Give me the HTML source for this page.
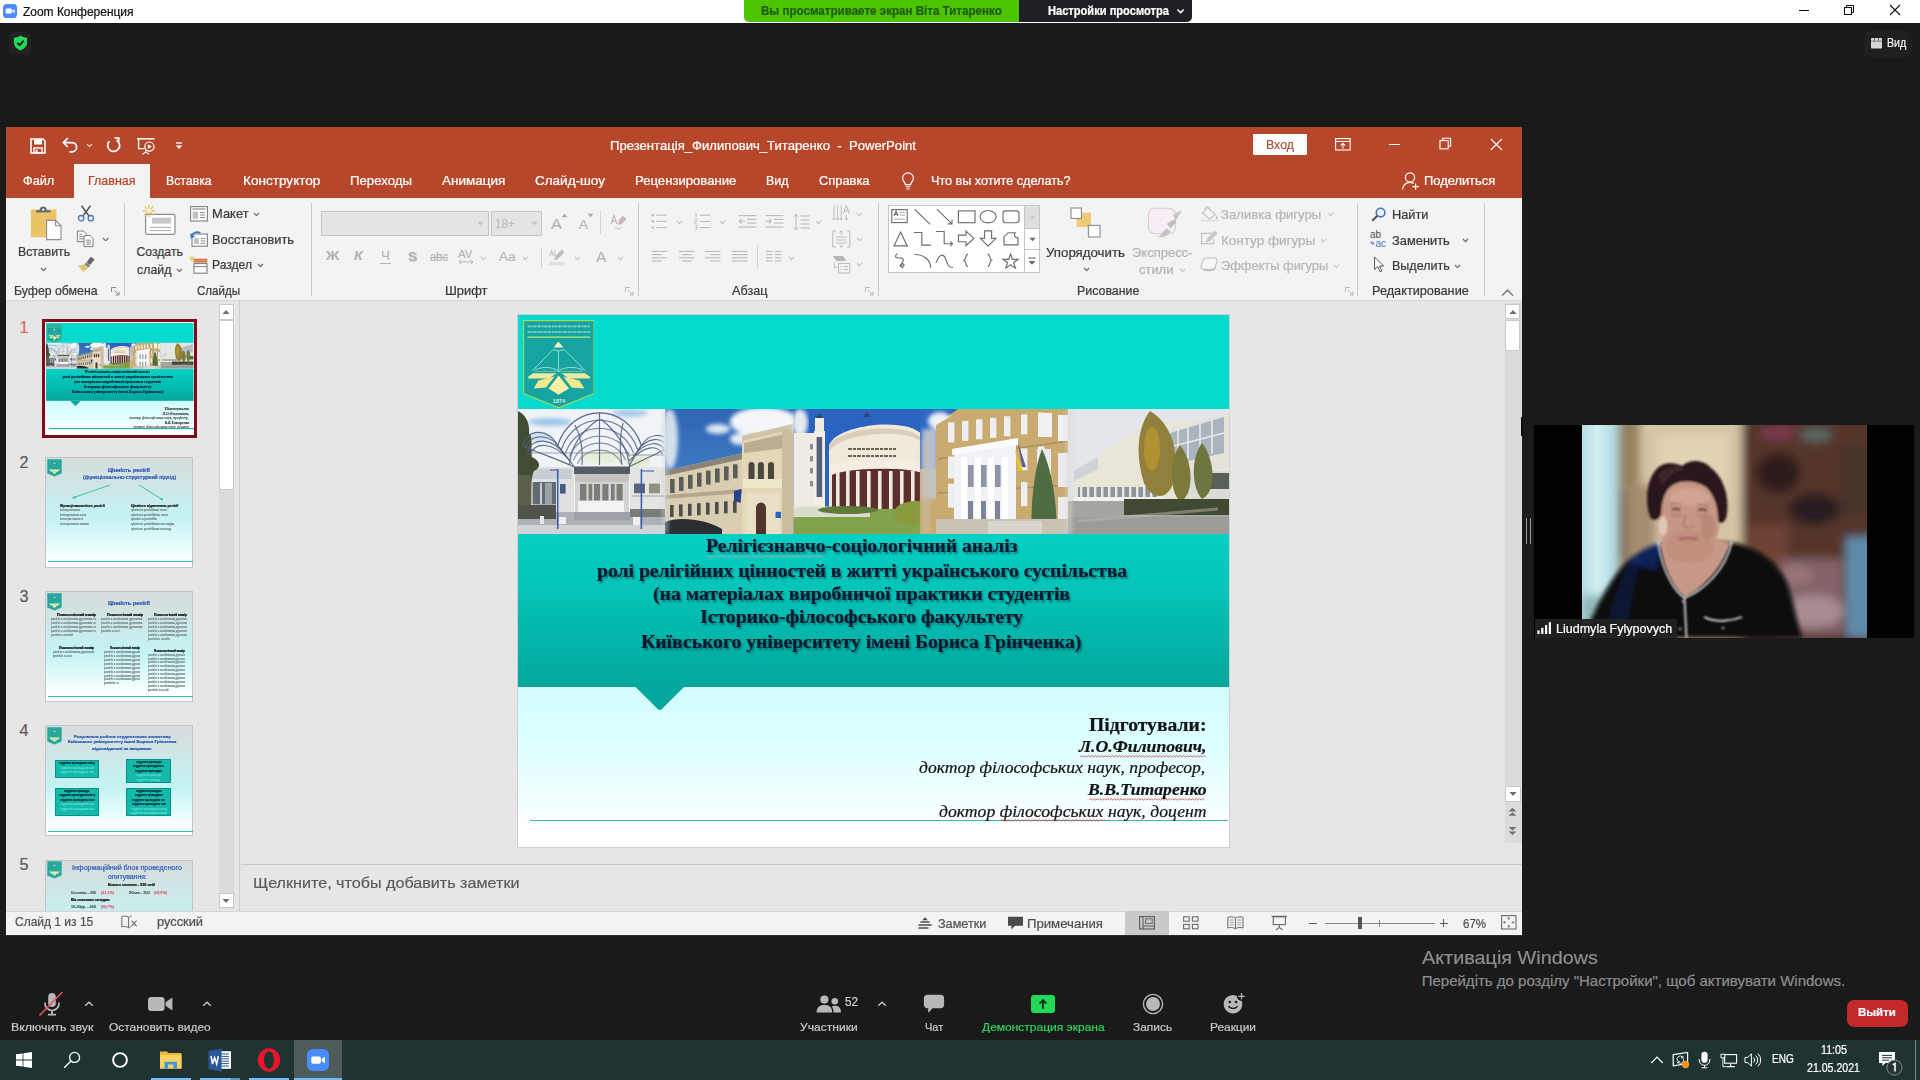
<!DOCTYPE html>
<html><head><meta charset="utf-8"><title>Zoom</title>
<style>
html,body{margin:0;padding:0;}
body{width:1920px;height:1080px;overflow:hidden;background:#1a1a1a;font-family:"Liberation Sans",sans-serif;position:relative;}
.t{position:absolute;white-space:pre;transform-origin:0 0;line-height:1;-webkit-text-stroke:0.22px currentColor;}
.r{position:absolute;display:block;}
</style></head><body>
<div class="r" style="left:0px;top:0px;width:1920px;height:23px;background:#fff;"></div>
<svg class="r" style="left:3px;top:4px;" width="14" height="14" viewBox="0 0 14 14"><rect x="0" y="0" width="14" height="14" rx="3.6" fill="#4a8cff"/><rect x="2.6" y="4.6" width="6.2" height="4.9" rx="1.2" fill="#fff"/><path d="M9.3 6.4 L11.6 4.9 V9.2 L9.3 7.7 Z" fill="#fff"/></svg>
<div class="t" style="left:23.20px;top:5.57px;font-size:12.20px;color:#111;transform:scaleX(0.9810);">Zoom Конференция</div>
<div class="r" style="left:744px;top:0px;width:275px;height:22px;background:#4cc400;border-radius:0 0 0 5px;"></div>
<div class="t" style="left:761.00px;top:4.87px;font-size:12.20px;color:#1f5c12;transform:scaleX(0.9509);font-weight:bold;">Вы просматриваете экран Віта Титаренко</div>
<div class="r" style="left:1019px;top:0px;width:173px;height:22px;background:#1f2024;border-radius:0 0 5px 0;"></div>
<div class="t" style="left:1048.00px;top:4.87px;font-size:12.20px;color:#fff;transform:scaleX(0.9106);font-weight:bold;">Настройки просмотра</div>
<svg class="r" style="left:1176px;top:7px;" width="10" height="8" viewBox="0 0 10 8"><path d="M1.5 2.5 L4.6 5.6 L7.7 2.5" fill="none" stroke="#fff" stroke-width="1.5"/></svg>
<div class="r" style="left:1799px;top:10px;width:10px;height:1px;background:#111;"></div>
<svg class="r" style="left:1843px;top:4px;" width="12" height="12" viewBox="0 0 12 12"><path d="M3.5 3.5 V1.5 H10.5 V8.5 H8.5" fill="none" stroke="#111" stroke-width="1"/><rect x="1.5" y="3.5" width="7" height="7" fill="none" stroke="#111" stroke-width="1"/></svg>
<svg class="r" style="left:1889px;top:4px;" width="12" height="12" viewBox="0 0 12 12"><path d="M1 1 L11 11 M11 1 L1 11" stroke="#111" stroke-width="1.1"/></svg>
<div class="r" style="left:8.5px;top:32px;width:22.5px;height:22.5px;background:#222;border-radius:5px;"></div>
<svg class="r" style="left:13px;top:35px;" width="15" height="16" viewBox="0 0 15 16"><path d="M7.5 0.6 C5.6 2 3.4 2.6 0.9 2.7 V7.6 C0.9 11.3 3.6 13.9 7.5 15.4 C11.4 13.9 14.1 11.3 14.1 7.6 V2.7 C11.6 2.6 9.4 2 7.5 0.6 Z" fill="#23d959"/><path d="M4.3 7.8 L6.6 10 L10.8 5.6" fill="none" stroke="#1a1a1a" stroke-width="1.7"/></svg>
<div class="r" style="left:1864px;top:31px;width:48px;height:26px;background:#202020;border-radius:7px;"></div>
<svg class="r" style="left:1870.5px;top:38px;" width="11" height="10.5" viewBox="0 0 11 10.5"><rect x="0" y="0" width="11" height="10.5" rx="0.8" fill="#d6d6d6"/><rect x="0" y="2.7" width="11" height="0.9" fill="#232323" opacity="0.55"/><rect x="3.1" y="0" width="0.9" height="2.7" fill="#232323" opacity="0.7"/><rect x="7" y="0" width="0.9" height="2.7" fill="#232323" opacity="0.7"/></svg>
<div class="t" style="left:1886.70px;top:36.77px;font-size:12.20px;color:#f2f2f2;transform:scaleX(0.8744);">Вид</div>
<div class="r" style="left:6px;top:127px;width:1516px;height:71px;background:#b7472a;"></div>
<svg class="r" style="left:30px;top:138px;" width="16" height="16" viewBox="0 0 16 16"><path d="M1 1 H13 L15 3 V15 H1 Z" fill="none" stroke="#fff" stroke-width="1.6"/><rect x="4" y="1.5" width="8" height="5" fill="#fff"/><rect x="4" y="10" width="8" height="5" fill="none" stroke="#fff" stroke-width="1.4"/><rect x="5.6" y="11.6" width="2" height="3.4" fill="#fff"/></svg>
<svg class="r" style="left:62px;top:137px;" width="17" height="17" viewBox="0 0 17 17"><path d="M1.5 5.6 H10 A4.6 4.6 0 0 1 10 14.8 H7.5" fill="none" stroke="#fff" stroke-width="1.7"/><path d="M5.8 1.2 L1.4 5.6 L5.8 10" fill="none" stroke="#fff" stroke-width="1.7"/></svg>
<svg class="r" style="left:85.5px;top:143px;" width="7" height="4.6" viewBox="0 0 7 4.6"><path d="M1 1 L3.5 3.6 L6 1" fill="none" stroke="#f0d0c6" stroke-width="1.1"/></svg>
<svg class="r" style="left:105px;top:137px;" width="17" height="17" viewBox="0 0 17 17"><path d="M11.6 3.2 A6 6 0 1 1 4.4 4.2" fill="none" stroke="#fff" stroke-width="1.7"/><path d="M9.2 1 H13.6 V5.4" fill="none" stroke="#fff" stroke-width="1.7" transform="rotate(8 11.6 3.2)"/></svg>
<svg class="r" style="left:136px;top:137px;" width="20" height="19" viewBox="0 0 20 19"><path d="M1 1.8 H18.6" stroke="#fff" stroke-width="1.5"/><path d="M2.6 2 V11.6 H8.4" fill="none" stroke="#fff" stroke-width="1.3"/><circle cx="13.4" cy="9.6" r="4.6" fill="none" stroke="#fff" stroke-width="1.2"/><path d="M11.9 7.2 L15.8 9.6 L11.9 12 Z" fill="#fff"/><path d="M9.8 12.6 V15 M6.4 17.4 L9.8 15 L13.2 17.4" fill="none" stroke="#fff" stroke-width="1.1"/></svg>
<svg class="r" style="left:175px;top:141px;" width="8" height="10" viewBox="0 0 8 10"><path d="M1 2 H7" stroke="#fff" stroke-width="1.3"/><path d="M0.8 4.6 H7.2 L4 8 Z" fill="#fff"/></svg>
<div class="t" style="left:610.00px;top:139.67px;font-size:12.20px;color:#fff;transform:scaleX(1.0756);">Презентація_Филипович_Титаренко  -  PowerPoint</div>
<div class="r" style="left:1253px;top:134px;width:54px;height:21px;background:#fff;border-radius:1px;"></div>
<div class="t" style="left:1266.00px;top:139.27px;font-size:12.20px;color:#b0503a;transform:scaleX(1.0145);">Вход</div>
<svg class="r" style="left:1334.5px;top:137.5px;" width="16" height="13" viewBox="0 0 16 13"><rect x="0.6" y="0.6" width="14.6" height="11.4" fill="none" stroke="#fff" stroke-width="1.1"/><path d="M0.6 3.4 H15.2" stroke="#fff" stroke-width="1"/><path d="M7.9 10.4 V5.4 M5.6 7.6 L7.9 5.2 L10.2 7.6" fill="none" stroke="#fff" stroke-width="1.1"/></svg>
<div class="r" style="left:1388.5px;top:143.5px;width:11.5px;height:1.2px;background:#fff;"></div>
<svg class="r" style="left:1439px;top:137px;" width="13" height="13" viewBox="0 0 13 13"><path d="M3.6 3.4 V1.2 H11.6 V9.2 H9.4" fill="none" stroke="#fff" stroke-width="1.1"/><rect x="1" y="3.6" width="8.2" height="8.2" fill="none" stroke="#fff" stroke-width="1.1"/></svg>
<svg class="r" style="left:1490px;top:137.5px;" width="13" height="13" viewBox="0 0 13 13"><path d="M0.8 0.8 L12 12 M12 0.8 L0.8 12" stroke="#fff" stroke-width="1.2"/></svg>
<div class="r" style="left:74px;top:164px;width:76px;height:34px;background:#f3f3f3;"></div>
<div class="t" style="left:23.00px;top:175.27px;font-size:12.20px;color:#fff;transform:scaleX(1.0435);">Файл</div>
<div class="t" style="left:87.50px;top:175.27px;font-size:12.20px;color:#b7472a;transform:scaleX(1.0229);">Главная</div>
<div class="t" style="left:166.30px;top:175.27px;font-size:12.20px;color:#fff;transform:scaleX(1.0078);">Вставка</div>
<div class="t" style="left:242.50px;top:175.27px;font-size:12.20px;color:#fff;transform:scaleX(1.1141);">Конструктор</div>
<div class="t" style="left:350.00px;top:175.27px;font-size:12.20px;color:#fff;transform:scaleX(1.0834);">Переходы</div>
<div class="t" style="left:441.50px;top:175.27px;font-size:12.20px;color:#fff;transform:scaleX(1.1088);">Анимация</div>
<div class="t" style="left:535.00px;top:175.27px;font-size:12.20px;color:#fff;transform:scaleX(1.1068);">Слайд-шоу</div>
<div class="t" style="left:635.00px;top:175.27px;font-size:12.20px;color:#fff;transform:scaleX(1.0774);">Рецензирование</div>
<div class="t" style="left:766.00px;top:175.27px;font-size:12.20px;color:#fff;transform:scaleX(1.0194);">Вид</div>
<div class="t" style="left:818.50px;top:175.27px;font-size:12.20px;color:#fff;transform:scaleX(1.0552);">Справка</div>
<div class="t" style="left:931.30px;top:175.27px;font-size:12.20px;color:#fff;transform:scaleX(1.0358);">Что вы хотите сделать?</div>
<svg class="r" style="left:900px;top:172px;" width="16" height="19" viewBox="0 0 16 19"><path d="M5.4 12.6 C5.4 10.6 2.6 9.4 2.6 6.2 A5.4 5.4 0 0 1 13.4 6.2 C13.4 9.4 10.6 10.6 10.6 12.6 Z" fill="none" stroke="#fff" stroke-width="1.2"/><path d="M5.6 14.8 H10.4 M6.4 17 H9.6" stroke="#fff" stroke-width="1.1"/></svg>
<svg class="r" style="left:1401px;top:171px;" width="20" height="20" viewBox="0 0 20 20"><circle cx="9" cy="6.4" r="4.6" fill="none" stroke="#fff" stroke-width="1.2"/><path d="M1.4 18.4 C2.2 13.8 5 11.4 9 11.4 C10.6 11.4 11.8 11.8 12.8 12.4" fill="none" stroke="#fff" stroke-width="1.2"/><path d="M14.6 12.4 V18.8 M11.4 15.6 H17.8" stroke="#fff" stroke-width="1.2"/></svg>
<div class="t" style="left:1423.80px;top:175.27px;font-size:12.20px;color:#fff;transform:scaleX(1.0569);">Поделиться</div>
<div class="r" style="left:6px;top:198px;width:1516px;height:101.5px;background:#f3f3f3;"></div>
<div class="r" style="left:6px;top:299.5px;width:1516px;height:1px;background:#d6d6d6;"></div>
<svg class="r" style="left:30px;top:206px;" width="33" height="35" viewBox="0 0 33 35"><rect x="0.8" y="3.6" width="25.6" height="27.6" rx="1" fill="#ecc467"/><path d="M6 6.4 V4.2 H9.6 A3.6 3.6 0 0 1 16.8 4.2 H20.6 V6.4 Z" fill="#6a6a72"/><circle cx="13.2" cy="3.6" r="1.2" fill="#f3f3f3"/><path d="M16.6 14.4 H25.6 L31 19.8 V33.6 H16.6 Z" fill="#fff" stroke="#8c8c92" stroke-width="1.1"/><path d="M25.6 14.4 V19.8 H31" fill="none" stroke="#8c8c92" stroke-width="1.1"/></svg>
<div class="t" style="left:17.80px;top:246.17px;font-size:12.20px;color:#3a3a3a;transform:scaleX(1.0094);">Вставить</div>
<svg class="r" style="left:40px;top:267px;" width="7" height="4.6" viewBox="0 0 7 4.6"><path d="M1 1 L3.5 3.6 L6 1" fill="none" stroke="#666" stroke-width="1.1"/></svg>
<svg class="r" style="left:77px;top:205px;" width="18" height="17" viewBox="0 0 18 17"><path d="M4.6 0.8 L12.4 11.6 M13.4 0.8 L5.6 11.6" stroke="#50505a" stroke-width="1.5"/><circle cx="4.2" cy="13.2" r="2.7" fill="none" stroke="#4a7ab5" stroke-width="1.3"/><circle cx="13.8" cy="13.2" r="2.7" fill="none" stroke="#4a7ab5" stroke-width="1.3"/></svg>
<svg class="r" style="left:76px;top:230px;" width="19" height="18" viewBox="0 0 19 18"><path d="M1.4 1 H7.6 L10.4 3.8 V11.6 H1.4 Z" fill="#fff" stroke="#7a7a82" stroke-width="1"/><path d="M3.2 4.4 H6.4 M3.2 6.6 H8.4 M3.2 8.8 H8.4" stroke="#7a7a82" stroke-width="0.9"/><path d="M8 5.6 H14.2 L17 8.4 V16.6 H8 Z" fill="#fff" stroke="#7a7a82" stroke-width="1"/><path d="M10 10.2 H15 M10 12.2 H15 M10 14.2 H15" stroke="#7a7a82" stroke-width="0.9"/></svg>
<svg class="r" style="left:102px;top:236.5px;" width="7.4" height="4.8" viewBox="0 0 7.4 4.8"><path d="M1 1 L3.7 3.8 L6.4 1" fill="none" stroke="#666" stroke-width="1.1"/></svg>
<svg class="r" style="left:77px;top:256px;" width="19" height="17" viewBox="0 0 19 17"><path d="M13.6 0.8 L17.6 3.4 L13 9 L9.6 6.6 Z" fill="#6a6068"/><path d="M9 6.4 L13.2 9.4 L11.6 11.4 L7.4 8.4 Z" fill="#8a8088"/><path d="M7 8.6 L11.4 11.8 L6.4 15.8 L0.8 9.8 Z" fill="#dcc66a"/></svg>
<div class="t" style="left:14.40px;top:284.67px;font-size:12.20px;color:#3a3a3a;transform:scaleX(1.0085);">Буфер обмена</div>
<svg class="r" style="left:111px;top:287px;" width="9" height="9" viewBox="0 0 9 9"><path d="M0.5 5 V0.5 H5 M3.4 3.4 L8 8 M8 4.6 V8 H4.6" fill="none" stroke="#8a8a8a" stroke-width="1"/></svg>
<div class="r" style="left:124px;top:202.5px;width:1px;height:93px;background:#c9c9c9;"></div>
<svg class="r" style="left:142px;top:204px;" width="35" height="32" viewBox="0 0 35 32"><rect x="3.6" y="10.4" width="29.4" height="20" rx="1.6" fill="#fff" stroke="#8c8c92" stroke-width="1.2"/><rect x="10" y="13.6" width="19" height="6" fill="#c8c8cc"/><path d="M7.6 23.4 H29 M7.6 26.6 H29" stroke="#a8a8ae" stroke-width="1"/><path d="M7 0.6 V13 M0.8 6.8 H13.2 M2.6 2.4 L11.4 11.2 M11.4 2.4 L2.6 11.2" stroke="#e2c45a" stroke-width="1.3"/><circle cx="7" cy="6.8" r="2.2" fill="#f3f3f3"/></svg>
<div class="t" style="left:136.50px;top:246.17px;font-size:12.20px;color:#3a3a3a;">Создать</div>
<div class="t" style="left:136.90px;top:264.07px;font-size:12.20px;color:#3a3a3a;transform:scaleX(1.0136);">слайд</div>
<svg class="r" style="left:176px;top:267.6px;" width="7" height="4.6" viewBox="0 0 7 4.6"><path d="M1 1 L3.5 3.6 L6 1" fill="none" stroke="#666" stroke-width="1.1"/></svg>
<svg class="r" style="left:190px;top:205.5px;" width="18" height="16" viewBox="0 0 18 16"><rect x="0.6" y="0.6" width="16.8" height="14.4" fill="#fff" stroke="#7e7e86" stroke-width="1.1"/><path d="M2.4 3 H15.6" stroke="#9a9aa0" stroke-width="1.3"/><rect x="2.6" y="5.4" width="5.4" height="7.4" fill="#c2c2c6"/><path d="M10 6.4 H15 M10 9 H15 M10 11.6 H15" stroke="#8a8a90" stroke-width="1"/></svg>
<div class="t" style="left:211.90px;top:208.27px;font-size:12.20px;color:#3a3a3a;transform:scaleX(1.0600);">Макет</div>
<svg class="r" style="left:253.4px;top:211.6px;" width="7" height="4.6" viewBox="0 0 7 4.6"><path d="M1 1 L3.5 3.6 L6 1" fill="none" stroke="#666" stroke-width="1.1"/></svg>
<svg class="r" style="left:190px;top:230px;" width="18" height="17" viewBox="0 0 18 17"><rect x="2" y="4" width="15.4" height="12.2" fill="#fff" stroke="#7e7e86" stroke-width="1.1"/><rect x="4" y="8" width="5" height="6" fill="#c2c2c6"/><path d="M10.6 8.6 H15.4 M10.6 11 H15.4 M10.6 13.4 H15.4" stroke="#8a8a90" stroke-width="1"/><path d="M1.2 7.6 C1.8 3.2 6 0.8 10.4 2.8" fill="none" stroke="#3f78c0" stroke-width="1.7"/><path d="M0 3.4 L1 8.4 L5.4 6.4 Z" fill="#3f78c0"/></svg>
<div class="t" style="left:211.90px;top:234.07px;font-size:12.20px;color:#3a3a3a;transform:scaleX(1.0509);">Восстановить</div>
<svg class="r" style="left:189px;top:255px;" width="19" height="19" viewBox="0 0 19 19"><rect x="5" y="8.6" width="13" height="9.6" fill="#fff" stroke="#7e7e86" stroke-width="1.1"/><rect x="5" y="4" width="13" height="3.2" fill="#e0855a" stroke="#c96a40" stroke-width="0.6"/><path d="M5 11.6 H18" stroke="#7e7e86" stroke-width="1"/><path d="M3 0.4 V6.6 M0 3.5 H6 M0.9 1.4 L5.1 5.6 M5.1 1.4 L0.9 5.6" stroke="#e8c75a" stroke-width="0.9"/></svg>
<div class="t" style="left:211.90px;top:259.47px;font-size:12.20px;color:#3a3a3a;transform:scaleX(0.9919);">Раздел</div>
<svg class="r" style="left:256.5px;top:263px;" width="7" height="4.6" viewBox="0 0 7 4.6"><path d="M1 1 L3.5 3.6 L6 1" fill="none" stroke="#666" stroke-width="1.1"/></svg>
<div class="t" style="left:196.90px;top:284.67px;font-size:12.20px;color:#3a3a3a;transform:scaleX(0.9490);">Слайды</div>
<div class="r" style="left:310.5px;top:202.5px;width:1px;height:93px;background:#c9c9c9;"></div>
<div class="r" style="left:320.5px;top:210.5px;width:168.5px;height:25px;background:#e4e4e4;box-sizing:border-box;border:1px solid #c6c6c6;"></div>
<div class="r" style="left:491px;top:210.5px;width:51px;height:25px;background:#e4e4e4;box-sizing:border-box;border:1px solid #c6c6c6;"></div>
<svg class="r" style="left:477px;top:221px;" width="7" height="5" viewBox="0 0 7 5"><path d="M0.5 0.8 H6.5 L3.5 4.2 Z" fill="#c0c0c0"/></svg>
<svg class="r" style="left:530.5px;top:221px;" width="7" height="5" viewBox="0 0 7 5"><path d="M0.5 0.8 H6.5 L3.5 4.2 Z" fill="#c0c0c0"/></svg>
<div class="t" style="left:495.00px;top:216.60px;font-size:13.00px;color:#bdbdbd;transform:scaleX(0.9069);">18+</div>
<div class="t" style="left:551.00px;top:216.28px;font-size:15.50px;color:#b4b4b4;transform:scaleX(1.0639);">A</div>
<svg class="r" style="left:561px;top:213px;" width="7" height="5" viewBox="0 0 7 5"><path d="M0.5 4.2 L3.5 0.8 L6.5 4.2 Z" fill="#a8a8a8"/></svg>
<div class="t" style="left:579.00px;top:218.82px;font-size:12.50px;color:#b4b4b4;transform:scaleX(1.0794);">A</div>
<svg class="r" style="left:587px;top:213px;" width="7" height="5" viewBox="0 0 7 5"><path d="M0.5 0.8 H6.5 L3.5 4.2 Z" fill="#a8a8a8"/></svg>
<div class="r" style="left:600px;top:211px;width:1px;height:23px;background:#d4d4d4;"></div>
<svg class="r" style="left:610px;top:214px;" width="17" height="17" viewBox="0 0 17 17"><path d="M1 10 L4 1.6 L7 10 M2 7.2 H6" fill="none" stroke="#b8b8b8" stroke-width="1.2"/><path d="M9.4 5.6 L13 1.6 L16.4 5 L11.4 10.6 L7.8 10.6 Z" fill="#c9b6bf"/><path d="M5 13.4 C8 15.6 10 15.2 12 13" fill="none" stroke="#c0c0c0" stroke-width="1"/></svg>
<div class="t" style="left:325.50px;top:250.33px;font-size:12.60px;color:#b4b4b4;transform:scaleX(1.1679);font-weight:bold;">Ж</div>
<div class="t" style="left:353.80px;top:250.33px;font-size:12.60px;color:#b4b4b4;transform:scaleX(1.1232);font-weight:bold;font-style:italic;">К</div>
<div class="t" style="left:380.50px;top:250.33px;font-size:12.60px;color:#b4b4b4;transform:scaleX(1.0717);">Ч</div>
<div class="r" style="left:380px;top:263px;width:10.5px;height:1.1px;background:#b4b4b4;"></div>
<div class="t" style="left:408.00px;top:249.66px;font-size:13.40px;color:#b4b4b4;transform:scaleX(1.0069);font-weight:bold;text-shadow:1px 1px 1px #ccc;">S</div>
<div class="t" style="left:430.00px;top:250.84px;font-size:12.00px;color:#b4b4b4;transform:scaleX(0.9303);text-decoration:line-through;">abc</div>
<div class="t" style="left:458.00px;top:248.63px;font-size:10.60px;color:#b4b4b4;transform:scaleX(1.0858);">AV</div>
<svg class="r" style="left:457.5px;top:259px;" width="16" height="6" viewBox="0 0 16 6"><path d="M1 3 H15 M3.4 0.8 L1 3 L3.4 5.2 M12.6 0.8 L15 3 L12.6 5.2" fill="none" stroke="#b4b4b4" stroke-width="1"/></svg>
<svg class="r" style="left:480px;top:255.6px;" width="7" height="4.6" viewBox="0 0 7 4.6"><path d="M1 1 L3.5 3.6 L6 1" fill="none" stroke="#c4c4c4" stroke-width="1.1"/></svg>
<div class="t" style="left:499.00px;top:250.00px;font-size:13.00px;color:#b4b4b4;transform:scaleX(1.0376);">Aa</div>
<svg class="r" style="left:521.6px;top:255.6px;" width="7" height="4.6" viewBox="0 0 7 4.6"><path d="M1 1 L3.5 3.6 L6 1" fill="none" stroke="#c4c4c4" stroke-width="1.1"/></svg>
<div class="r" style="left:540.5px;top:247px;width:1px;height:21px;background:#d4d4d4;"></div>
<svg class="r" style="left:548px;top:248px;" width="18" height="18" viewBox="0 0 18 18"><path d="M1.6 8 L3.6 2.6 L5.6 8 M2.4 6.2 H4.8" fill="none" stroke="#b8b8b8" stroke-width="0.9"/><path d="M7 2 V8" stroke="#b8b8b8" stroke-width="0.9"/><path d="M13.6 1.6 L16.4 4.2 L9.4 11.4 L6.2 12 L7 8.8 Z" fill="#bdbdbd"/><rect x="1" y="14" width="16" height="3.4" fill="#e4dede"/></svg>
<svg class="r" style="left:573.6px;top:255.6px;" width="7" height="4.6" viewBox="0 0 7 4.6"><path d="M1 1 L3.5 3.6 L6 1" fill="none" stroke="#c4c4c4" stroke-width="1.1"/></svg>
<div class="t" style="left:595.50px;top:248.90px;font-size:15.00px;color:#b4b4b4;transform:scaleX(1.0494);">A</div>
<svg class="r" style="left:617px;top:255.6px;" width="7" height="4.6" viewBox="0 0 7 4.6"><path d="M1 1 L3.5 3.6 L6 1" fill="none" stroke="#c4c4c4" stroke-width="1.1"/></svg>
<div class="t" style="left:445.00px;top:284.67px;font-size:12.20px;color:#3a3a3a;transform:scaleX(1.0588);">Шрифт</div>
<svg class="r" style="left:625px;top:287px;" width="9" height="9" viewBox="0 0 9 9"><path d="M0.5 5 V0.5 H5 M3.4 3.4 L8 8 M8 4.6 V8 H4.6" fill="none" stroke="#b8b8b8" stroke-width="1"/></svg>
<div class="r" style="left:638px;top:202.5px;width:1px;height:93px;background:#c9c9c9;"></div>
<svg class="r" style="left:651px;top:213px;" width="17" height="17" viewBox="0 0 17 17"><path d="M5.4 2.2 H16" stroke="#b9b9b9" stroke-width="1.1"/><path d="M5.4 8.4 H16" stroke="#b9b9b9" stroke-width="1.1"/><path d="M5.4 14.6 H16" stroke="#b9b9b9" stroke-width="1.1"/><circle cx="1.8" cy="2.2" r="1.2" fill="#b9b9b9"/><circle cx="1.8" cy="8.4" r="1.2" fill="#b9b9b9"/><circle cx="1.8" cy="14.6" r="1.2" fill="#b9b9b9"/></svg>
<svg class="r" style="left:676px;top:219.6px;" width="7" height="4.6" viewBox="0 0 7 4.6"><path d="M1 1 L3.5 3.6 L6 1" fill="none" stroke="#c4c4c4" stroke-width="1.1"/></svg>
<svg class="r" style="left:694px;top:213px;" width="17" height="17" viewBox="0 0 17 17"><path d="M5.8 2.2 H16.4" stroke="#b9b9b9" stroke-width="1.1"/><path d="M5.8 8.4 H16.4" stroke="#b9b9b9" stroke-width="1.1"/><path d="M5.8 14.6 H16.4" stroke="#b9b9b9" stroke-width="1.1"/><path d="M1 0.6 H2.2 V4 M0.8 6.4 H2.8 V8.2 H0.8 V10.2 H2.8 M0.8 12.4 H2.8 V16.4 H0.8 M1.4 14.4 H2.8" fill="none" stroke="#b9b9b9" stroke-width="0.8"/></svg>
<svg class="r" style="left:719px;top:219.6px;" width="7" height="4.6" viewBox="0 0 7 4.6"><path d="M1 1 L3.5 3.6 L6 1" fill="none" stroke="#c4c4c4" stroke-width="1.1"/></svg>
<svg class="r" style="left:738px;top:214px;" width="19" height="16" viewBox="0 0 19 16"><path d="M0.4 1.6 H18.4" stroke="#b9b9b9" stroke-width="1.1"/><path d="M9 5.4 H18.4" stroke="#b9b9b9" stroke-width="1.1"/><path d="M9 9 H18.4" stroke="#b9b9b9" stroke-width="1.1"/><path d="M0.4 13 H18.4" stroke="#b9b9b9" stroke-width="1.1"/><path d="M7 7.2 H1.2 M3.6 4.8 L1.2 7.2 L3.6 9.6" fill="none" stroke="#b9b9b9" stroke-width="1.1"/></svg>
<svg class="r" style="left:765px;top:214px;" width="19" height="16" viewBox="0 0 19 16"><path d="M0.4 1.6 H18.4" stroke="#b9b9b9" stroke-width="1.1"/><path d="M9 5.4 H18.4" stroke="#b9b9b9" stroke-width="1.1"/><path d="M9 9 H18.4" stroke="#b9b9b9" stroke-width="1.1"/><path d="M0.4 13 H18.4" stroke="#b9b9b9" stroke-width="1.1"/><path d="M0.6 7.2 H6.4 M4 4.8 L6.4 7.2 L4 9.6" fill="none" stroke="#b9b9b9" stroke-width="1.1"/></svg>
<svg class="r" style="left:793px;top:213px;" width="18" height="18" viewBox="0 0 18 18"><path d="M7.4 3 H16.6" stroke="#b9b9b9" stroke-width="1.1"/><path d="M7.4 7 H16.6" stroke="#b9b9b9" stroke-width="1.1"/><path d="M7.4 11 H16.6" stroke="#b9b9b9" stroke-width="1.1"/><path d="M7.4 15 H16.6" stroke="#b9b9b9" stroke-width="1.1"/><path d="M3 1.4 V16.6 M0.8 3.8 L3 1.4 L5.2 3.8 M0.8 14.2 L3 16.6 L5.2 14.2" fill="none" stroke="#b9b9b9" stroke-width="1"/></svg>
<svg class="r" style="left:815.4px;top:219.6px;" width="7" height="4.6" viewBox="0 0 7 4.6"><path d="M1 1 L3.5 3.6 L6 1" fill="none" stroke="#c4c4c4" stroke-width="1.1"/></svg>
<svg class="r" style="left:832px;top:204px;" width="19" height="19" viewBox="0 0 19 19"><path d="M2 1.4 V16 M5.6 1.4 V16 M9.2 1.4 V16 M0.6 14.2 L2 16.2 L3.4 14.2 M4.2 14.2 L5.6 16.2 L7 14.2 M7.8 14.2 L9.2 16.2 L10.6 14.2" fill="none" stroke="#b9b9b9" stroke-width="0.9"/><path d="M11.4 9.6 L14.4 1.6 L17.4 9.6 M12.4 7 H16.4" fill="none" stroke="#b9b9b9" stroke-width="1"/><path d="M14.4 11 V16 M13 14.4 L14.4 16.2 L15.8 14.4" fill="none" stroke="#b9b9b9" stroke-width="0.9"/></svg>
<svg class="r" style="left:856px;top:211.6px;" width="7" height="4.6" viewBox="0 0 7 4.6"><path d="M1 1 L3.5 3.6 L6 1" fill="none" stroke="#c4c4c4" stroke-width="1.1"/></svg>
<svg class="r" style="left:832px;top:230px;" width="19" height="18" viewBox="0 0 19 18"><path d="M3.6 1 H0.8 V17 H3.6 M15 1 H17.8 V17 H15" fill="none" stroke="#b9b9b9" stroke-width="1"/><path d="M4 7 H14.6" stroke="#b9b9b9" stroke-width="0.9"/><path d="M4 10 H14.6" stroke="#b9b9b9" stroke-width="0.9"/><path d="M4 13 H14.6" stroke="#b9b9b9" stroke-width="0.9"/><path d="M9.3 0.8 V5 M7.6 2.6 L9.3 0.8 L11 2.6 M9.3 17.2 V14.4 M7.6 15.6 L9.3 17.4 L11 15.6" fill="none" stroke="#b9b9b9" stroke-width="0.9"/></svg>
<svg class="r" style="left:856px;top:237px;" width="7" height="4.6" viewBox="0 0 7 4.6"><path d="M1 1 L3.5 3.6 L6 1" fill="none" stroke="#c4c4c4" stroke-width="1.1"/></svg>
<svg class="r" style="left:832px;top:255px;" width="19" height="19" viewBox="0 0 19 19"><path d="M0.6 1 H10.8 L14.8 6 H4.6 Z" fill="#b4b4b4"/><rect x="6.4" y="8.4" width="11.4" height="9.6" fill="#f3f3f3" stroke="#b9b9b9" stroke-width="1"/><path d="M8.4 11.6 H10 M11.4 11.6 H16 M8.4 14.6 H10 M11.4 14.6 H16" stroke="#b9b9b9" stroke-width="1"/><path d="M2.4 7 V12.6 H5" fill="none" stroke="#b9b9b9" stroke-width="0.9"/></svg>
<svg class="r" style="left:856px;top:262.4px;" width="7" height="4.6" viewBox="0 0 7 4.6"><path d="M1 1 L3.5 3.6 L6 1" fill="none" stroke="#c4c4c4" stroke-width="1.1"/></svg>
<svg class="r" style="left:652px;top:250px;" width="16" height="13" viewBox="0 0 16 13"><path d="M0 1.4 H15.4" stroke="#b9b9b9" stroke-width="1.1"/><path d="M0 4.6 H10" stroke="#b9b9b9" stroke-width="1.1"/><path d="M0 7.8 H15.4" stroke="#b9b9b9" stroke-width="1.1"/><path d="M0 11 H10" stroke="#b9b9b9" stroke-width="1.1"/></svg>
<svg class="r" style="left:678.6px;top:250px;" width="16" height="13" viewBox="0 0 16 13"><path d="M0 1.4 H15.4" stroke="#b9b9b9" stroke-width="1.1"/><path d="M2.8 4.6 H12.6" stroke="#b9b9b9" stroke-width="1.1"/><path d="M0 7.8 H15.4" stroke="#b9b9b9" stroke-width="1.1"/><path d="M2.8 11 H12.6" stroke="#b9b9b9" stroke-width="1.1"/></svg>
<svg class="r" style="left:705.2px;top:250px;" width="16" height="13" viewBox="0 0 16 13"><path d="M0 1.4 H15.4" stroke="#b9b9b9" stroke-width="1.1"/><path d="M5.4 4.6 H15.4" stroke="#b9b9b9" stroke-width="1.1"/><path d="M0 7.8 H15.4" stroke="#b9b9b9" stroke-width="1.1"/><path d="M5.4 11 H15.4" stroke="#b9b9b9" stroke-width="1.1"/></svg>
<svg class="r" style="left:731.8px;top:250px;" width="16" height="13" viewBox="0 0 16 13"><path d="M0 1.4 H15.4" stroke="#b9b9b9" stroke-width="1.1"/><path d="M0 4.6 H15.4" stroke="#b9b9b9" stroke-width="1.1"/><path d="M0 7.8 H15.4" stroke="#b9b9b9" stroke-width="1.1"/><path d="M0 11 H15.4" stroke="#b9b9b9" stroke-width="1.1"/></svg>
<div class="r" style="left:756.6px;top:246px;width:1px;height:23px;background:#d4d4d4;"></div>
<svg class="r" style="left:765.6px;top:250px;" width="16" height="13" viewBox="0 0 16 13"><path d="M0 1.4 H6.6" stroke="#b9b9b9" stroke-width="1.1"/><path d="M0 4.6 H6.6" stroke="#b9b9b9" stroke-width="1.1"/><path d="M0 7.8 H6.6" stroke="#b9b9b9" stroke-width="1.1"/><path d="M0 11 H6.6" stroke="#b9b9b9" stroke-width="1.1"/><path d="M8.8 1.4 H15.4" stroke="#b9b9b9" stroke-width="1.1"/><path d="M8.8 4.6 H15.4" stroke="#b9b9b9" stroke-width="1.1"/><path d="M8.8 7.8 H15.4" stroke="#b9b9b9" stroke-width="1.1"/><path d="M8.8 11 H15.4" stroke="#b9b9b9" stroke-width="1.1"/></svg>
<svg class="r" style="left:788.4px;top:255.6px;" width="7" height="4.6" viewBox="0 0 7 4.6"><path d="M1 1 L3.5 3.6 L6 1" fill="none" stroke="#c4c4c4" stroke-width="1.1"/></svg>
<div class="t" style="left:732.00px;top:284.67px;font-size:12.20px;color:#3a3a3a;transform:scaleX(1.0373);">Абзац</div>
<svg class="r" style="left:865px;top:287px;" width="9" height="9" viewBox="0 0 9 9"><path d="M0.5 5 V0.5 H5 M3.4 3.4 L8 8 M8 4.6 V8 H4.6" fill="none" stroke="#b8b8b8" stroke-width="1"/></svg>
<div class="r" style="left:877.5px;top:202.5px;width:1px;height:93px;background:#c9c9c9;"></div>
<div class="r" style="left:888.4px;top:205.3px;width:151.4px;height:68px;background:#fff;box-sizing:border-box;border:1px solid #c6c6c6;"></div>
<div class="r" style="left:1024.4px;top:205.3px;width:15.4px;height:68px;background:#fff;box-sizing:border-box;border:1px solid #c6c6c6;"></div>
<div class="r" style="left:1025.4px;top:206.3px;width:13.4px;height:22px;background:#dedede;"></div>
<div class="r" style="left:1024.4px;top:228.3px;width:15.4px;height:1px;background:#c6c6c6;"></div>
<div class="r" style="left:1024.4px;top:249.4px;width:15.4px;height:1px;background:#c6c6c6;"></div>
<svg class="r" style="left:1028.6px;top:214px;" width="7" height="5" viewBox="0 0 7 5"><path d="M0.4 4.4 L3.5 1 L6.6 4.4 Z" fill="#c9c9c9"/></svg>
<svg class="r" style="left:1028.6px;top:237px;" width="7" height="5" viewBox="0 0 7 5"><path d="M0.4 0.8 H6.6 L3.5 4.2 Z" fill="#666"/></svg>
<svg class="r" style="left:1028.2px;top:257px;" width="8" height="9" viewBox="0 0 8 9"><path d="M0.4 1 H7.6" stroke="#666" stroke-width="1.1"/><path d="M0.6 4 H7.4 L4 7.8 Z" fill="#666"/></svg>
<svg class="r" style="left:888.4px;top:205.3px;" width="136" height="68" viewBox="0 0 136 68"><g transform="translate(-888.4 -205.3)"><rect x="892.2" y="209.9" width="15.4" height="13" fill="none" stroke="#6e6e6e" stroke-width="1.15"/><path d="M894.4 216.2 L896.4 211.6 L898.4 216.2 M895.2 214.6 H897.6" fill="none" stroke="#6e6e6e" stroke-width="1.15"/><path d="M900.4 212.6 H905.4 M900.4 215.4 H905.4 M894.2 219.4 H905.4" stroke="#9a9aa2" stroke-width="0.9"/><path d="M915 209.4 L930.6 224.6" fill="none" stroke="#6e6e6e" stroke-width="1.15"/><path d="M937.2 209.4 L952.4 224.2 M948 224.2 H952.4 V219.8" fill="none" stroke="#6e6e6e" stroke-width="1.15"/><rect x="958.8" y="211.2" width="16.6" height="11.8" fill="none" stroke="#6e6e6e" stroke-width="1.15"/><ellipse cx="988.5" cy="217" rx="8" ry="6.2" fill="none" stroke="#6e6e6e" stroke-width="1.15"/><rect x="1003.4" y="211.2" width="16" height="11.8" rx="2.6" fill="none" stroke="#6e6e6e" stroke-width="1.15"/><path d="M901 232.4 L907.6 246.2 H894.4 Z" fill="none" stroke="#6e6e6e" stroke-width="1.15"/><path d="M914.2 232.8 H922.2 V245.4 H931.4" fill="none" stroke="#6e6e6e" stroke-width="1.15"/><path d="M936.4 231.8 H944.6 V244 H953 M950.6 241.6 L953 244 L950.6 246.4" fill="none" stroke="#6e6e6e" stroke-width="1.15"/><path d="M958.8 235.4 H966.4 V231.4 L974.2 238.7 L966.4 246 V242 H958.8 Z" fill="none" stroke="#6e6e6e" stroke-width="1.15"/><path d="M985 231.2 H992 V238.6 H996.2 L988.5 246.4 L980.8 238.6 H985 Z" fill="none" stroke="#6e6e6e" stroke-width="1.15"/><path d="M1004.4 245.2 V237 L1008.6 233 H1015.6 C1014 236 1015.4 238.6 1018.4 238.2 V245.2 Z" fill="none" stroke="#6e6e6e" stroke-width="1.15"/><path d="M897.6 253.6 C893 259 899 258 901.6 258.4 C905.6 259 903 263 901 265 C899.6 267 903.6 268 904.4 265.6 C904.8 263.6 901.6 263.6 901.6 265.6 C901.6 267 902.6 268 903.4 268.6" fill="none" stroke="#6e6e6e" stroke-width="1.15"/><path d="M915 254.8 C924 254.6 930.8 260 931 268" fill="none" stroke="#6e6e6e" stroke-width="1.15"/><path d="M936.4 263.2 C939 256 943 252.6 945.6 258.4 C948 264 949 268.8 953.4 267.6" fill="none" stroke="#6e6e6e" stroke-width="1.15"/><path d="M968.4 254.4 C965.4 254.4 967 259.6 964.4 260.6 C967 261.6 965.4 266.8 968.4 266.8" fill="none" stroke="#6e6e6e" stroke-width="1.15"/><path d="M988 254.4 C991 254.4 989.4 259.6 992 260.6 C989.4 261.6 991 266.8 988 266.8" fill="none" stroke="#6e6e6e" stroke-width="1.15"/><path d="M1011 254.2 L1012.9 259.6 H1018.6 L1014 263 L1015.8 268.4 L1011 265 L1006.2 268.4 L1008 263 L1003.4 259.6 H1009.1 Z" fill="none" stroke="#6e6e6e" stroke-width="1.15"/></g></svg>
<svg class="r" style="left:1069.5px;top:206.5px;" width="32" height="32" viewBox="0 0 32 32"><rect x="6.6" y="5.6" width="14.4" height="14.4" fill="#efcb76"/><rect x="1" y="1" width="10.4" height="10.4" fill="#fff" stroke="#8a8a90" stroke-width="1.1"/><rect x="18.4" y="18.4" width="11.6" height="11.6" fill="#fff" stroke="#8a8a90" stroke-width="1.1"/></svg>
<div class="t" style="left:1046.00px;top:246.87px;font-size:12.20px;color:#3a3a3a;transform:scaleX(1.0882);">Упорядочить</div>
<svg class="r" style="left:1082.6px;top:267px;" width="7" height="4.6" viewBox="0 0 7 4.6"><path d="M1 1 L3.5 3.6 L6 1" fill="none" stroke="#666" stroke-width="1.1"/></svg>
<svg class="r" style="left:1147px;top:207px;" width="35" height="33" viewBox="0 0 35 33"><rect x="1.4" y="1.2" width="27" height="25.6" rx="6.4" fill="#f6eef4" stroke="#d4cdd2" stroke-width="1.1"/><path d="M26 8 L33.4 3.6 L34 5.6 L28.4 14 Z" fill="#c9c6c8"/><path d="M20 16.6 L27.6 12.6 L29 15.2 L23.6 21.4 Z" fill="#bfbcbe"/><path d="M11 30 C14 29 15.4 24 20 21.4 L23.4 24.4 C20.4 29.4 15 31 11 30 Z" fill="#c6c3c5"/></svg>
<div class="t" style="left:1131.50px;top:246.87px;font-size:12.20px;color:#b2b2b2;transform:scaleX(1.0655);">Экспресс-</div>
<div class="t" style="left:1139.40px;top:264.27px;font-size:12.20px;color:#b2b2b2;transform:scaleX(1.0605);">стили</div>
<svg class="r" style="left:1179px;top:267.6px;" width="7" height="4.6" viewBox="0 0 7 4.6"><path d="M1 1 L3.5 3.6 L6 1" fill="none" stroke="#c4c4c4" stroke-width="1.1"/></svg>
<svg class="r" style="left:1200px;top:205px;" width="19" height="17" viewBox="0 0 19 17"><path d="M7.4 2.4 L15.4 9.4 L9.4 14 L2.4 8 Z" fill="#f3f3f3" stroke="#c0c0c0" stroke-width="1.1"/><path d="M5.2 5 C4.2 1 8.6 0.2 9.2 3.6" fill="none" stroke="#c0c0c0" stroke-width="1"/><path d="M16.4 10.4 C17.6 12 18.2 13 17.4 14 C16.6 14.8 15.4 14.2 15.6 13 Z" fill="#c0c0c0"/><rect x="0.6" y="14.6" width="17.6" height="2" fill="#e4dede"/></svg>
<div class="t" style="left:1221.40px;top:209.07px;font-size:12.20px;color:#b6b6b6;transform:scaleX(1.0766);">Заливка фигуры</div>
<svg class="r" style="left:1326.6px;top:212.4px;" width="7" height="4.6" viewBox="0 0 7 4.6"><path d="M1 1 L3.5 3.6 L6 1" fill="none" stroke="#c8c8c8" stroke-width="1.1"/></svg>
<svg class="r" style="left:1200px;top:230px;" width="19" height="16" viewBox="0 0 19 16"><path d="M12 3.4 H1.6 V13.6 H13.6 V9" fill="none" stroke="#c0c0c0" stroke-width="1.1"/><path d="M14.6 0.8 L17.6 3.4 L9.4 11.6 L6 12.4 L6.8 9 Z" fill="#c6c6c6"/></svg>
<div class="t" style="left:1221.40px;top:234.87px;font-size:12.20px;color:#b6b6b6;transform:scaleX(1.1054);">Контур фигуры</div>
<svg class="r" style="left:1320px;top:238.2px;" width="7" height="4.6" viewBox="0 0 7 4.6"><path d="M1 1 L3.5 3.6 L6 1" fill="none" stroke="#c8c8c8" stroke-width="1.1"/></svg>
<svg class="r" style="left:1200px;top:256px;" width="19" height="17" viewBox="0 0 19 17"><path d="M6 2 H14.6 C16.6 2 17.4 3.6 16.8 5.6 L15 11 C14.4 12.6 13.6 13.4 11.8 13.4 H3.4 C1.4 13.4 0.6 11.6 1.2 9.8 L3 4.4 C3.6 2.6 4.4 2 6 2 Z" fill="#f7f7f7" stroke="#c0c0c0" stroke-width="1.1"/><path d="M2.4 13.6 C4 15.4 8 15.6 13 14.8 C15 14.2 15.6 13 16.2 11.4 L15 11 C14.4 12.6 13.6 13.4 11.8 13.4 Z" fill="#bdbdbd"/></svg>
<div class="t" style="left:1220.90px;top:260.37px;font-size:12.20px;color:#b6b6b6;transform:scaleX(1.0554);">Эффекты фигуры</div>
<svg class="r" style="left:1333.4px;top:263.8px;" width="7" height="4.6" viewBox="0 0 7 4.6"><path d="M1 1 L3.5 3.6 L6 1" fill="none" stroke="#c8c8c8" stroke-width="1.1"/></svg>
<div class="t" style="left:1077.40px;top:284.67px;font-size:12.20px;color:#3a3a3a;transform:scaleX(1.0172);">Рисование</div>
<svg class="r" style="left:1344.6px;top:287px;" width="9" height="9" viewBox="0 0 9 9"><path d="M0.5 5 V0.5 H5 M3.4 3.4 L8 8 M8 4.6 V8 H4.6" fill="none" stroke="#b8b8b8" stroke-width="1"/></svg>
<div class="r" style="left:1357.3px;top:202.5px;width:1px;height:93px;background:#c9c9c9;"></div>
<svg class="r" style="left:1370.5px;top:206.5px;" width="16" height="15" viewBox="0 0 16 15"><circle cx="9.6" cy="5.6" r="4.3" fill="none" stroke="#3f78c0" stroke-width="1.6"/><path d="M6.4 8.8 L1.2 13.8" stroke="#50505a" stroke-width="2"/></svg>
<div class="t" style="left:1391.50px;top:209.07px;font-size:12.20px;color:#3a3a3a;transform:scaleX(1.0484);">Найти</div>
<svg class="r" style="left:1369px;top:230px;" width="19" height="18" viewBox="0 0 19 18"><text x="1" y="8.4" font-family="Liberation Sans" font-size="10" fill="#50505a">ab</text><text x="6.4" y="16.6" font-family="Liberation Sans" font-size="10" fill="#3f78c0">ac</text><path d="M2.2 11 V13.4 H5 M3.6 12 L5 13.4 L3.6 14.8" fill="none" stroke="#3f78c0" stroke-width="0.9"/></svg>
<div class="t" style="left:1391.50px;top:234.87px;font-size:12.20px;color:#3a3a3a;transform:scaleX(1.0543);">Заменить</div>
<svg class="r" style="left:1462px;top:238.2px;" width="7" height="4.6" viewBox="0 0 7 4.6"><path d="M1 1 L3.5 3.6 L6 1" fill="none" stroke="#666" stroke-width="1.1"/></svg>
<svg class="r" style="left:1373px;top:256px;" width="12" height="17" viewBox="0 0 12 17"><path d="M1.6 1 V13.4 L4.8 10.6 L7.2 15.8 L9 15 L6.6 10 H10.6 Z" fill="#fff" stroke="#50505a" stroke-width="1"/></svg>
<div class="t" style="left:1391.50px;top:260.37px;font-size:12.20px;color:#3a3a3a;transform:scaleX(1.0269);">Выделить</div>
<svg class="r" style="left:1454.4px;top:263.8px;" width="7" height="4.6" viewBox="0 0 7 4.6"><path d="M1 1 L3.5 3.6 L6 1" fill="none" stroke="#666" stroke-width="1.1"/></svg>
<div class="t" style="left:1372.40px;top:284.67px;font-size:12.20px;color:#3a3a3a;transform:scaleX(1.0426);">Редактирование</div>
<div class="r" style="left:1483.6px;top:202.5px;width:1px;height:93px;background:#c9c9c9;"></div>
<svg class="r" style="left:1500.6px;top:289px;" width="13" height="8" viewBox="0 0 13 8"><path d="M1 6.6 L6.5 1.2 L12 6.6" fill="none" stroke="#666" stroke-width="1.2"/></svg>
<div class="r" style="left:6px;top:300.5px;width:1516px;height:610px;background:#e6e6e6;"></div>
<div class="r" style="left:218.5px;top:303.5px;width:15.5px;height:605px;background:#dcdbdc;"></div>
<div class="r" style="left:218.5px;top:303.5px;width:15.5px;height:16.5px;background:#fff;box-sizing:border-box;border:1px solid #c9c9c9;"></div>
<svg class="r" style="left:222.4px;top:308.6px;" width="8" height="6" viewBox="0 0 8 6"><path d="M0.4 5 L4 1 L7.6 5 Z" fill="#6e6e6e"/></svg>
<div class="r" style="left:218.5px;top:320px;width:15.5px;height:170px;background:#fff;box-sizing:border-box;border:1px solid #c9c9c9;"></div>
<div class="r" style="left:218.5px;top:892.6px;width:15.5px;height:15.4px;background:#fff;box-sizing:border-box;border:1px solid #c9c9c9;"></div>
<svg class="r" style="left:222.4px;top:897.6px;" width="8" height="6" viewBox="0 0 8 6"><path d="M0.4 1 H7.6 L4 5 Z" fill="#6e6e6e"/></svg>
<div class="r" style="left:239.4px;top:300.5px;width:1px;height:610px;background:#cfcfcf;"></div>
<div class="t" style="left:19.60px;top:319.19px;font-size:16.20px;color:#df6a52;">1</div>
<div class="r" style="left:41.7px;top:319px;width:155.3px;height:118.6px;background:#fdf4f2;box-sizing:border-box;border:3.2px solid #810b1d;"></div>
<div class="r" style="left:45.9px;top:322.6px;width:711px;height:532.5px;transform:scale(0.2078,0.2094);transform-origin:0 0;overflow:hidden;">
<div class="r" style="left:0px;top:0px;width:711px;height:94.6px;background:#04dace;"></div>
<div class="r" style="left:0px;top:219px;width:711px;height:153.2px;background:linear-gradient(180deg,#06d0c4 0%,#05c4b8 35%,#04b4a9 70%,#03a69c 100%);"></div>
<div class="r" style="left:0px;top:372px;width:711px;height:160.5px;background:linear-gradient(180deg,#d3fdfd 0%,#dcfefe 35%,#eeffff 65%,#ffffff 88%);"></div>
<svg class="r" style="left:112px;top:371.6px;" width="60" height="27" viewBox="0 0 60 27"><path d="M4.5 0 H55 L31.6 23.2 Q29.8 24.8 28 23.2 Z" fill="#04a89e"/></svg>
<div class="r" style="left:12.3px;top:505.2px;width:698.7px;height:1.5px;background:#39b9ad;"></div>
<svg class="r" style="left:0px;top:94.1px;" width="711" height="125" viewBox="0 0 711 125"><defs><filter id="pb" x="-2%" y="-5%" width="104%" height="110%"><feGaussianBlur stdDeviation="0.7"/></filter><filter id="pb2" x="-5%" y="-10%" width="110%" height="120%"><feGaussianBlur stdDeviation="2.2"/></filter><linearGradient id="sk2" x1="0" y1="0" x2="0" y2="1"><stop offset="0" stop-color="#2f66b4"/><stop offset="1" stop-color="#4c8ad6"/></linearGradient><linearGradient id="sk1" x1="0" y1="0" x2="0" y2="1"><stop offset="0" stop-color="#cfe0f0"/><stop offset="1" stop-color="#f3f5f6"/></linearGradient></defs><g filter="url(#pb)"><rect x="0" y="0" width="148" height="125" fill="#f1f4f7"/><g filter="url(#pb2)"><ellipse cx="32" cy="13" rx="22" ry="4" fill="#9cc4e8"/><ellipse cx="112" cy="4" rx="18" ry="4" fill="#a6cbea"/><ellipse cx="20" cy="28" rx="14" ry="4" fill="#c3dcf0"/><ellipse cx="120" cy="52" rx="12" ry="6" fill="#dfe9c8"/><ellipse cx="84" cy="48" rx="22" ry="7" fill="#e6efd8"/></g><rect x="13" y="58" width="43" height="45" fill="#dfe0e2"/><rect x="112" y="58" width="36" height="45" fill="#e4e4e2"/><rect x="14" y="60" width="40" height="10" fill="#c9ccd2"/><rect x="14.6" y="73" width="23.4" height="22.4" fill="#636a72"/><rect x="22" y="74" width="2" height="21" fill="#c9cdd0"/><rect x="27" y="74" width="7" height="21" fill="#98a4a8"/><rect x="42" y="75" width="5.6" height="9.6" fill="#4a5a80"/><rect x="56" y="57.5" width="56" height="7.5" fill="#565c66"/><rect x="57" y="65" width="54" height="39" fill="#d3d3d4"/><rect x="57" y="65" width="54" height="8" fill="#c4c2be"/><rect x="60" y="92" width="46" height="11" fill="#f3f3f5"/><rect x="62" y="75" width="6.4" height="16.4" fill="#7c7c78"/><rect x="70.6" y="75" width="3.6" height="16.4" fill="#7c7c78"/><rect x="76" y="75" width="6" height="16.4" fill="#7c7c78"/><rect x="84.4" y="75" width="6" height="16.4" fill="#7c7c78"/><rect x="93" y="75" width="3.6" height="16.4" fill="#7c7c78"/><rect x="98.6" y="75" width="6" height="16.4" fill="#7c7c78"/><rect x="116" y="74.6" width="11" height="9.6" fill="#5b6676"/><rect x="131" y="74.6" width="11" height="9.6" fill="#8f917e"/><rect x="114" y="86" width="32" height="2" fill="#c4c4c2"/><g filter="url(#pb)"><path d="M0 2 C8 6 12 14 11 24 C16 30 12 40 14 48 C22 52 24 58 16 62 C12 70 14 84 13 100 H0 Z" fill="#3f4d33"/><path d="M0 66 H13 V100 H0 Z" fill="#5b5f4c"/></g><rect x="0" y="103" width="148" height="22" fill="#aeb0b8"/><path d="M0 116 H148 V125 H0 Z" fill="#d2d3d6"/><rect x="0" y="96" width="38" height="14" fill="#50524c"/><rect x="112" y="100" width="36" height="8" fill="#7a7d74"/><rect x="56" y="103" width="56" height="8" fill="#9ea0aa"/><rect x="22" y="107" width="4" height="8" fill="#e8e8e8"/><rect x="41" y="108" width="7" height="7" fill="#f0f0f0"/><rect x="115" y="108" width="7" height="8" fill="#f0f0f0"/><path d="M39.5 36.7 C54.2 -7.124 108.8 -7.124 123.5 36.7" fill="none" stroke="#4e5d80" stroke-width="1.15" opacity="0.95"/><path d="M43.5 40.3 C56.8 1.624 106.2 1.624 119.5 40.3" fill="none" stroke="#4e5d80" stroke-width="1.15" opacity="0.88"/><path d="M47.5 43.9 C59.4 11.032 103.6 11.032 115.5 43.9" fill="none" stroke="#4e5d80" stroke-width="1.15" opacity="0.81"/><path d="M51.5 47.5 C62 20.44 101 20.44 111.5 47.5" fill="none" stroke="#4e5d80" stroke-width="1.15" opacity="0.74"/><path d="M55.5 51.1 C64.6 28.528 98.4 28.528 107.5 51.1" fill="none" stroke="#4e5d80" stroke-width="1.15" opacity="0.67"/><path d="M59.5 54.7 C67.2 36.616 95.8 36.616 103.5 54.7" fill="none" stroke="#4e5d80" stroke-width="1.15" opacity="0.6"/><path d="M80.2 10.5 Q52.9 30 51.5 56" fill="none" stroke="#4e5d80" stroke-width="1.15" opacity="0.9"/><path d="M81.5 4 Q81.5 30 81.5 56" fill="none" stroke="#4e5d80" stroke-width="1.15" opacity="0.9"/><path d="M82.7 10 Q107.9 30 111.5 56" fill="none" stroke="#4e5d80" stroke-width="1.15" opacity="0.9"/><path d="M57 16 Q66 34 64 56 M105 14 Q100 34 104 56" fill="none" stroke="#4e5d80" stroke-width="1.15" opacity="0.85"/><path d="M4.8 36.7 C9 19 31 19 39.7 36.7" fill="none" stroke="#4e5d80" stroke-width="1.15" opacity="0.9"/><path d="M123.4 36.7 C131 23.5 146 23.5 151 34" fill="none" stroke="#4e5d80" stroke-width="1.15" opacity="0.9"/><path d="M7.3 39.7 C11.5 23.5 32.5 23.5 43.7 41.7" fill="none" stroke="#4e5d80" stroke-width="1.15" opacity="0.9"/><path d="M119.4 41.7 C130 27.5 144 27.5 149 38" fill="none" stroke="#4e5d80" stroke-width="1.15" opacity="0.9"/><path d="M9.8 42.7 C14 28 34 28 47.7 46.7" fill="none" stroke="#4e5d80" stroke-width="1.15" opacity="0.9"/><path d="M115.4 46.7 C129 31.5 142 31.5 147 42" fill="none" stroke="#4e5d80" stroke-width="1.15" opacity="0.9"/><path d="M12.3 45.7 C16.5 32.5 35.5 32.5 51.7 51.7" fill="none" stroke="#4e5d80" stroke-width="1.15" opacity="0.9"/><path d="M111.4 51.7 C128 35.5 140 35.5 145 46" fill="none" stroke="#4e5d80" stroke-width="1.15" opacity="0.9"/><path d="M5 37 C20 44 40 50 56 58 M39.7 36.7 C46 44 52 52 56 57.5 M123.4 36.7 C118 44 114 52 111 57.5 M148 40 C136 46 122 52 111 58" fill="none" stroke="#4e5d80" stroke-width="1.15" opacity="0.9"/><path d="M8 44 H56 M112 46 H148 M52 44 H112" fill="none" stroke="#4e5d80" stroke-width="1.15" opacity="0.55"/><path d="M39.7 60 V120 M123.4 60 V120" stroke="#3b5cae" stroke-width="1.5"/><path d="M32 61 H40 M123 62 H136" stroke="#3b5cae" stroke-width="1.1"/><rect x="147" y="0" width="130" height="125" fill="url(#sk2)"/><g filter="url(#pb2)"><ellipse cx="246" cy="13" rx="34" ry="15" fill="#f4f6fa"/><ellipse cx="200" cy="20" rx="12" ry="5" fill="#dfe8f4"/><ellipse cx="222" cy="30" rx="10" ry="6" fill="#e8edf5"/><ellipse cx="152" cy="30" rx="8" ry="30" fill="#e6ecf0" opacity="0.9"/></g><path d="M147 62 L225 44 V125 H147 Z" fill="#d9ceb2"/><path d="M147 62 L225 44 V50 L147 67 Z" fill="#8a8478"/><path d="M147 86 L225 80 V84 L147 90 Z" fill="#b3a88e"/><rect x="152" y="70" width="4.6" height="14" fill="#5c5c58"/><rect x="152" y="96" width="3.6" height="12" fill="#4e4e4a"/><rect x="161" y="67.9" width="4.6" height="14" fill="#5c5c58"/><rect x="161" y="95.4" width="3.6" height="12" fill="#4e4e4a"/><rect x="170" y="65.8" width="4.6" height="14" fill="#5c5c58"/><rect x="170" y="94.8" width="3.6" height="12" fill="#4e4e4a"/><rect x="179" y="63.7" width="4.6" height="14" fill="#5c5c58"/><rect x="179" y="94.2" width="3.6" height="12" fill="#4e4e4a"/><rect x="188" y="61.6" width="4.6" height="14" fill="#5c5c58"/><rect x="188" y="93.6" width="3.6" height="12" fill="#4e4e4a"/><rect x="197" y="59.5" width="4.6" height="14" fill="#5c5c58"/><rect x="197" y="93" width="3.6" height="12" fill="#4e4e4a"/><rect x="206" y="57.4" width="4.6" height="14" fill="#5c5c58"/><rect x="206" y="92.4" width="3.6" height="12" fill="#4e4e4a"/><rect x="215" y="55.3" width="4.6" height="14" fill="#5c5c58"/><rect x="215" y="91.8" width="3.6" height="12" fill="#4e4e4a"/><path d="M224 27 L276 14.7 V125 H224 Z" fill="#e3d7b8"/><path d="M224 27 L276 14.7 V20 L224 32 Z" fill="#cfc4a8"/><path d="M226 34 L276 23 V38 L226 44 Z" fill="#b9ae92"/><path d="M230.5 74 V56 A3 3 0 0 1 236.5 56 V74 Z" fill="#4a4640"/><path d="M239.9 74 V56 A3 3 0 0 1 245.9 56 V74 Z" fill="#4a4640"/><path d="M250 74 V56 A3 3 0 0 1 256 56 V74 Z" fill="#4a4640"/><rect x="225" y="70" width="46" height="9" fill="#efe5cb"/><rect x="228" y="84" width="34" height="41" fill="#e9dfc6"/><rect x="264" y="20" width="12" height="105" fill="#c9bd9f"/><path d="M238 125 V99 A5 5.6 0 0 1 248 99 V125 Z" fill="#4f342b"/><path d="M216 82 L223.6 80 L222.6 94 L216 92 Z" fill="#27408c"/><rect x="257.6" y="102.8" width="5.4" height="6.2" fill="#2f62c0"/><path d="M147 113 C160 107 188 110 204 120 V125 H147 Z" fill="#2b2d30"/><rect x="275.5" y="0" width="132.5" height="125" fill="#2a63c0"/><g filter="url(#pb2)"><ellipse cx="282" cy="14" rx="8" ry="14" fill="#e6ebf2"/></g><rect x="275.5" y="24" width="30.5" height="101" fill="#f0ece3"/><rect x="296" y="22" width="11" height="90" fill="#f3efe6"/><rect x="297" y="9" width="9" height="14" fill="#f0ece2"/><path d="M298 9 L301.5 4 L305 9 Z" fill="#31446e"/><rect x="298.6" y="28" width="5.6" height="60" fill="#56627c"/><rect x="292" y="35" width="3" height="5.4" fill="#8a8e98"/><rect x="292" y="47" width="3" height="5.4" fill="#8a8e98"/><rect x="292" y="59" width="3" height="5.4" fill="#8a8e98"/><rect x="292" y="72" width="3" height="5.4" fill="#8a8e98"/><path d="M311 100 V36 C320 14 392 8 404 26 V100 Z" fill="#f1e9da"/><path d="M311 36 C322 18 392 12 404 30 V34 C392 18 322 24 311 42 Z" fill="#d9cfbc"/><path d="M345 8 L349 3 L353 8 Z" fill="#31446e"/><path d="M330 40 H378 M330 47 H378" stroke="#6a6258" stroke-width="1.8" stroke-dasharray="4 1 3 1"/><path d="M314 66 C330 58 390 58 404 64 V100 H314 Z" fill="#5b2e2e"/><rect x="318" y="62" width="3.6" height="40" fill="#efe8dc"/><rect x="328" y="62" width="3.6" height="40" fill="#efe8dc"/><rect x="338" y="62" width="3.6" height="40" fill="#efe8dc"/><rect x="349" y="62" width="3.6" height="40" fill="#efe8dc"/><rect x="360" y="62" width="3.6" height="40" fill="#efe8dc"/><rect x="371" y="62" width="3.6" height="40" fill="#efe8dc"/><rect x="382" y="62" width="3.6" height="40" fill="#efe8dc"/><rect x="393" y="62" width="3.6" height="40" fill="#efe8dc"/><path d="M311 56 C330 50 392 50 404 54 V62 C392 58 330 58 311 66 Z" fill="#f4eee2"/><path d="M275.5 100 H408 V125 H275.5 Z" fill="#82a34c"/><path d="M275.5 99 C300 96 330 98 352 103 V108 H275.5 Z" fill="#d9dccf"/><ellipse cx="398" cy="104" rx="22" ry="12" fill="#8a9a3c"/><ellipse cx="330" cy="101" rx="30" ry="4" fill="#5e7a3a"/><rect x="402" y="0" width="150" height="125" fill="#c8aa70"/><path d="M402 0 H440 L420 14 V60 H402 Z" fill="#2d66c2"/><g filter="url(#pb2)"><ellipse cx="422" cy="12" rx="12" ry="9" fill="#eef1f6"/><rect x="404" y="20" width="16" height="70" fill="#c4c8d0" opacity="0.9"/></g><path d="M418 16 L442 2 H552 V125 H418 Z" fill="#c9ab72"/><path d="M420 50 L552 32 M420 84 L552 76" stroke="#ab8f5c" stroke-width="1.6"/><rect x="430" y="13.42" width="6.4" height="20" fill="#efeff2"/><rect x="444" y="11.88" width="6.4" height="20" fill="#efeff2"/><rect x="458" y="10.34" width="6.4" height="20" fill="#efeff2"/><rect x="472" y="8.8" width="6.4" height="20" fill="#efeff2"/><rect x="486" y="7.26" width="6.4" height="20" fill="#efeff2"/><rect x="503" y="5.39" width="6.4" height="20" fill="#efeff2"/><rect x="520" y="3.52" width="6.4" height="20" fill="#efeff2"/><rect x="430" y="47.42" width="6.4" height="22" fill="#efeff2"/><rect x="444" y="45.88" width="6.4" height="22" fill="#efeff2"/><rect x="458" y="44.34" width="6.4" height="22" fill="#efeff2"/><rect x="472" y="42.8" width="6.4" height="22" fill="#efeff2"/><rect x="486" y="41.26" width="6.4" height="22" fill="#efeff2"/><rect x="503" y="39.39" width="6.4" height="22" fill="#efeff2"/><rect x="520" y="37.52" width="6.4" height="22" fill="#efeff2"/><rect x="430" y="74.684" width="6.4" height="24" fill="#efeff2"/><rect x="444" y="74.376" width="6.4" height="24" fill="#efeff2"/><rect x="458" y="74.068" width="6.4" height="24" fill="#efeff2"/><rect x="472" y="73.76" width="6.4" height="24" fill="#efeff2"/><rect x="486" y="73.452" width="6.4" height="24" fill="#efeff2"/><rect x="503" y="73.078" width="6.4" height="24" fill="#efeff2"/><rect x="520" y="72.704" width="6.4" height="24" fill="#efeff2"/><rect x="520" y="4" width="14" height="24" fill="#f1f1f4"/><rect x="540" y="6" width="12" height="26" fill="#f1f1f4"/><rect x="519" y="40" width="14" height="30" fill="#ececf0"/><rect x="540" y="44" width="12" height="34" fill="#ececf0"/><rect x="519" y="84" width="14" height="24" fill="#ececf0"/><rect x="540" y="88" width="12" height="24" fill="#ececf0"/><path d="M436 40 L498 30 V118 H436 Z" fill="#f1f2f6"/><path d="M434 40 L500 29 V36 L434 46 Z" fill="#fbfbfd"/><rect x="443" y="48" width="6" height="62" fill="#fff"/><rect x="457" y="48" width="6" height="62" fill="#fff"/><rect x="470" y="48" width="6" height="62" fill="#fff"/><rect x="484" y="48" width="6" height="62" fill="#fff"/><rect x="450" y="56" width="5.6" height="22" fill="#8f95a6"/><rect x="450" y="92" width="5" height="18" fill="#7d8498"/><rect x="463" y="56" width="5.6" height="22" fill="#8f95a6"/><rect x="463" y="92" width="5" height="18" fill="#7d8498"/><rect x="477" y="56" width="5.6" height="22" fill="#8f95a6"/><rect x="477" y="92" width="5" height="18" fill="#7d8498"/><path d="M497 40 L505 62 L500 62 Z" fill="#e2c42c"/><path d="M500 34 L508 58 L504 58 Z" fill="#5f5a8a"/><path d="M524 40 C516 60 512 100 514 122 H538 C540 100 534 60 524 40 Z" fill="#4f6d43"/><rect x="418" y="110" width="134" height="15" fill="#c9c3b6"/><rect x="470" y="112" width="54" height="13" fill="#d9d6ce"/><rect x="550" y="0" width="161" height="125" fill="#e3e6ea"/><path d="M556 62 L632 12 H711 V92 H556 Z" fill="#e9e5d8"/><path d="M556 62 L580 48 V60 L556 72 Z" fill="#cfd3d6"/><path d="M560 78 H640 V90 H560 Z" fill="#8f9498"/><rect x="562" y="78" width="2.4" height="12" fill="#e8e8e6"/><rect x="569" y="78" width="2.4" height="12" fill="#e8e8e6"/><rect x="576" y="78" width="2.4" height="12" fill="#e8e8e6"/><rect x="583" y="78" width="2.4" height="12" fill="#e8e8e6"/><rect x="590" y="78" width="2.4" height="12" fill="#e8e8e6"/><rect x="597" y="78" width="2.4" height="12" fill="#e8e8e6"/><rect x="604" y="78" width="2.4" height="12" fill="#e8e8e6"/><rect x="611" y="78" width="2.4" height="12" fill="#e8e8e6"/><rect x="618" y="78" width="2.4" height="12" fill="#e8e8e6"/><rect x="625" y="78" width="2.4" height="12" fill="#e8e8e6"/><rect x="632" y="78" width="2.4" height="12" fill="#e8e8e6"/><rect x="639" y="78" width="2.4" height="12" fill="#e8e8e6"/><rect x="556" y="88" width="90" height="6" fill="#f1f1ee"/><path d="M640 22 L711 4 V58 L640 72 Z" fill="#e4e2da"/><path d="M652 24 L706 8 V44 L652 56 Z" fill="#aab4bf"/><path d="M660 19.68 V52.24" stroke="#e9e9e6" stroke-width="1.6"/><path d="M670 16.78 V50.04" stroke="#e9e9e6" stroke-width="1.6"/><path d="M682 13.3 V47.4" stroke="#e9e9e6" stroke-width="1.6"/><path d="M694 9.82 V44.76" stroke="#e9e9e6" stroke-width="1.6"/><path d="M652 38 L706 24" stroke="#e9e9e6" stroke-width="1.4"/><rect x="664" y="62" width="47" height="28" fill="#dcdcd6"/><rect x="690" y="64" width="21" height="16" fill="#59605a"/><g filter="url(#pb)"><g transform="translate(22 0)"><path d="M610 2 C596 20 596 50 604 74 C612 92 630 92 634 70 C640 40 630 14 610 2 Z" fill="#90803a"/><ellipse cx="612" cy="40" rx="8" ry="22" fill="#b9962e" opacity="0.8"/></g><path d="M644 36 C632 52 634 84 644 92 C656 90 660 56 644 36 Z" fill="#7b7a3a" transform="translate(18 0)"/><path d="M676 34 C664 50 666 80 676 90 C690 84 690 52 676 34 Z" fill="#6d7440" transform="translate(8 0)"/></g><rect x="550" y="92" width="161" height="33" fill="#a5a6a0"/><path d="M606 90 H711 V106 H606 Z" fill="#3f4a32"/><path d="M550 108 H711 V125 H550 Z" fill="#9b9c98"/><path d="M560 112 L700 100" stroke="#b9b9b2" stroke-width="3" opacity="0.5"/></g><g filter="url(#pb2)" opacity="0.55"><rect x="145" y="0" width="5" height="125" fill="#d0d8e4"/><rect x="404" y="30" width="8" height="95" fill="#c8c0b0"/><rect x="548" y="0" width="6" height="125" fill="#d8d8d4"/></g></svg>
<svg class="r" style="left:5.1px;top:5.4px;" width="71.6" height="88.4" viewBox="0 0 71.6 88.4"><path d="M0.6 0.6 H71 V73.6 L35.8 87.8 L0.6 73.6 Z" fill="#17a39f" stroke="#9fdc5a" stroke-width="1.1"/><path d="M4.6 6.4 H67 M4.6 12 H67" stroke="#9ee6d6" stroke-width="1.7" stroke-dasharray="3.2 0.9 1.8 0.7 2.6 0.8" opacity="0.85"/><path d="M4.4 17.2 H67.2" stroke="#bfe77e" stroke-width="1.3"/><path d="M35.4 21.6 L40.4 27.6 H30.6 Z" fill="#f1eec0"/><path d="M30 29.6 L9.4 50.8 M41.2 29.6 L62.4 50.8 M30 29.6 L35.5 31 L41.2 29.6 M35.5 31 V50" fill="none" stroke="#9be3de" stroke-width="0.9"/><path d="M12 50 C20 46 30 47 35.5 51 C41 47 51 46 60 50" fill="none" stroke="#9be3de" stroke-width="0.9"/><path d="M12 51.4 H60" stroke="#7fd09a" stroke-width="0.8"/><path d="M5.2 56.8 L10 53.2 H33.4 L26 58.6 H5.2 Z M67 56.8 L62 53.2 H38.4 L46 58.6 H67 Z" fill="#f0eaa0"/><path d="M10.6 68.4 L15.4 60.6 L31.6 56.6 L23 67.4 Z M61.4 68.4 L56.4 60.6 L40.2 56.6 L48.6 67.4 Z" fill="#f3e98f"/><path d="M35.6 55.6 L46 68.4 L35.6 74.8 L25.6 68.4 Z" fill="#f6efa6"/><text x="35.8" y="82.6" text-anchor="middle" font-family="Liberation Sans" font-weight="bold" font-size="5.6" fill="#cfeedd">1874</text></svg>
<div class="t" style="left:188.40px;top:222.44px;font-size:18.70px;color:#0a1830;transform:scaleX(1.0505);font-weight:bold;font-family:'Liberation Serif',serif;text-shadow:1.6px 1.6px 1.6px rgba(0,70,75,0.55);">Релігієзнавчо-соціологічний аналіз</div>
<div class="t" style="left:79.00px;top:247.44px;font-size:18.70px;color:#0a1830;transform:scaleX(1.0523);font-weight:bold;font-family:'Liberation Serif',serif;text-shadow:1.6px 1.6px 1.6px rgba(0,70,75,0.55);">ролі релігійних цінностей в житті українського суспільства</div>
<div class="t" style="left:135.50px;top:270.54px;font-size:18.70px;color:#0a1830;transform:scaleX(1.0533);font-weight:bold;font-family:'Liberation Serif',serif;text-shadow:1.6px 1.6px 1.6px rgba(0,70,75,0.55);">(на матеріалах виробничої практики студентів</div>
<div class="t" style="left:182.50px;top:293.74px;font-size:18.70px;color:#0a1830;transform:scaleX(1.0536);font-weight:bold;font-family:'Liberation Serif',serif;text-shadow:1.6px 1.6px 1.6px rgba(0,70,75,0.55);">Історико-філософського факультету</div>
<div class="t" style="left:123.90px;top:318.04px;font-size:18.70px;color:#0a1830;transform:scaleX(1.0523);font-weight:bold;font-family:'Liberation Serif',serif;text-shadow:1.6px 1.6px 1.6px rgba(0,70,75,0.55);">Київського університету імені Бориса Грінченка)</div>
<svg class="r" style="left:188px;top:239.7px;" width="120" height="5" viewBox="0 0 120 5"><path d="M1 3.1 l1.7 -1.5 l1.7 1.5 l1.7 -1.5 l1.7 1.5 l1.7 -1.5 l1.7 1.5 l1.7 -1.5 l1.7 1.5 l1.7 -1.5 l1.7 1.5 l1.7 -1.5 l1.7 1.5 l1.7 -1.5 l1.7 1.5 l1.7 -1.5 l1.7 1.5 l1.7 -1.5 l1.7 1.5 l1.7 -1.5 l1.7 1.5 l1.7 -1.5 l1.7 1.5 l1.7 -1.5 l1.7 1.5 l1.7 -1.5 l1.7 1.5 l1.7 -1.5 l1.7 1.5 l1.7 -1.5 l1.7 1.5 l1.7 -1.5 l1.7 1.5 l1.7 -1.5 l1.7 1.5 l1.7 -1.5 l1.7 1.5 l1.7 -1.5 l1.7 1.5 l1.7 -1.5 l1.7 1.5 l1.7 -1.5 l1.7 1.5 l1.7 -1.5 l1.7 1.5 l1.7 -1.5 l1.7 1.5 l1.7 -1.5 l1.7 1.5 l1.7 -1.5 l1.7 1.5 l1.7 -1.5 l1.7 1.5 l1.7 -1.5 l1.7 1.5 l1.7 -1.5 l1.7 1.5 l1.7 -1.5 l1.7 1.5 l1.7 -1.5 l1.7 1.5 l1.7 -1.5 l1.7 1.5 l1.7 -1.5 l1.7 1.5 l1.7 -1.5 l1.7 1.5 l1.7 -1.5 l1.7 1.5" fill="none" stroke="#b9a9b0" stroke-width="0.9"/></svg>
<div class="t" style="left:571.60px;top:400.82px;font-size:19.80px;color:#141414;transform:scaleX(0.9941);font-weight:bold;font-family:'Liberation Serif',serif;">Підготували:</div>
<div class="t" style="left:561.40px;top:424.70px;font-size:16.60px;color:#141414;transform:scaleX(1.0641);font-weight:bold;font-style:italic;font-family:'Liberation Serif',serif;">Л.О.Филипович,</div>
<div class="t" style="left:401.60px;top:444.60px;font-size:17.20px;color:#141414;transform:scaleX(1.0239);font-style:italic;font-family:'Liberation Serif',serif;">доктор філософських наук, професор,</div>
<div class="t" style="left:570.50px;top:467.20px;font-size:16.60px;color:#141414;transform:scaleX(1.0636);font-weight:bold;font-style:italic;font-family:'Liberation Serif',serif;">В.В.Титаренко</div>
<div class="t" style="left:421.10px;top:488.00px;font-size:17.20px;color:#141414;transform:scaleX(1.0280);font-style:italic;font-family:'Liberation Serif',serif;">доктор філософських наук, доцент</div>
<svg class="r" style="left:561px;top:439.9px;" width="128" height="5" viewBox="0 0 128 5"><path d="M1 3.1 l1.7 -1.5 l1.7 1.5 l1.7 -1.5 l1.7 1.5 l1.7 -1.5 l1.7 1.5 l1.7 -1.5 l1.7 1.5 l1.7 -1.5 l1.7 1.5 l1.7 -1.5 l1.7 1.5 l1.7 -1.5 l1.7 1.5 l1.7 -1.5 l1.7 1.5 l1.7 -1.5 l1.7 1.5 l1.7 -1.5 l1.7 1.5 l1.7 -1.5 l1.7 1.5 l1.7 -1.5 l1.7 1.5 l1.7 -1.5 l1.7 1.5 l1.7 -1.5 l1.7 1.5 l1.7 -1.5 l1.7 1.5 l1.7 -1.5 l1.7 1.5 l1.7 -1.5 l1.7 1.5 l1.7 -1.5 l1.7 1.5 l1.7 -1.5 l1.7 1.5 l1.7 -1.5 l1.7 1.5 l1.7 -1.5 l1.7 1.5 l1.7 -1.5 l1.7 1.5 l1.7 -1.5 l1.7 1.5 l1.7 -1.5 l1.7 1.5 l1.7 -1.5 l1.7 1.5 l1.7 -1.5 l1.7 1.5 l1.7 -1.5 l1.7 1.5 l1.7 -1.5 l1.7 1.5 l1.7 -1.5 l1.7 1.5 l1.7 -1.5 l1.7 1.5 l1.7 -1.5 l1.7 1.5 l1.7 -1.5 l1.7 1.5 l1.7 -1.5 l1.7 1.5 l1.7 -1.5 l1.7 1.5 l1.7 -1.5 l1.7 1.5 l1.7 -1.5 l1.7 1.5 l1.7 -1.5 l1.7 1.5" fill="none" stroke="#d63b3b" stroke-width="0.8"/></svg>
<svg class="r" style="left:570px;top:482.5px;" width="120" height="5" viewBox="0 0 120 5"><path d="M1 3.1 l1.7 -1.5 l1.7 1.5 l1.7 -1.5 l1.7 1.5 l1.7 -1.5 l1.7 1.5 l1.7 -1.5 l1.7 1.5 l1.7 -1.5 l1.7 1.5 l1.7 -1.5 l1.7 1.5 l1.7 -1.5 l1.7 1.5 l1.7 -1.5 l1.7 1.5 l1.7 -1.5 l1.7 1.5 l1.7 -1.5 l1.7 1.5 l1.7 -1.5 l1.7 1.5 l1.7 -1.5 l1.7 1.5 l1.7 -1.5 l1.7 1.5 l1.7 -1.5 l1.7 1.5 l1.7 -1.5 l1.7 1.5 l1.7 -1.5 l1.7 1.5 l1.7 -1.5 l1.7 1.5 l1.7 -1.5 l1.7 1.5 l1.7 -1.5 l1.7 1.5 l1.7 -1.5 l1.7 1.5 l1.7 -1.5 l1.7 1.5 l1.7 -1.5 l1.7 1.5 l1.7 -1.5 l1.7 1.5 l1.7 -1.5 l1.7 1.5 l1.7 -1.5 l1.7 1.5 l1.7 -1.5 l1.7 1.5 l1.7 -1.5 l1.7 1.5 l1.7 -1.5 l1.7 1.5 l1.7 -1.5 l1.7 1.5 l1.7 -1.5 l1.7 1.5 l1.7 -1.5 l1.7 1.5 l1.7 -1.5 l1.7 1.5 l1.7 -1.5 l1.7 1.5 l1.7 -1.5 l1.7 1.5" fill="none" stroke="#d63b3b" stroke-width="0.8"/></svg>
<svg class="r" style="left:481px;top:503.7px;" width="108" height="5" viewBox="0 0 108 5"><path d="M1 3.1 l1.7 -1.5 l1.7 1.5 l1.7 -1.5 l1.7 1.5 l1.7 -1.5 l1.7 1.5 l1.7 -1.5 l1.7 1.5 l1.7 -1.5 l1.7 1.5 l1.7 -1.5 l1.7 1.5 l1.7 -1.5 l1.7 1.5 l1.7 -1.5 l1.7 1.5 l1.7 -1.5 l1.7 1.5 l1.7 -1.5 l1.7 1.5 l1.7 -1.5 l1.7 1.5 l1.7 -1.5 l1.7 1.5 l1.7 -1.5 l1.7 1.5 l1.7 -1.5 l1.7 1.5 l1.7 -1.5 l1.7 1.5 l1.7 -1.5 l1.7 1.5 l1.7 -1.5 l1.7 1.5 l1.7 -1.5 l1.7 1.5 l1.7 -1.5 l1.7 1.5 l1.7 -1.5 l1.7 1.5 l1.7 -1.5 l1.7 1.5 l1.7 -1.5 l1.7 1.5 l1.7 -1.5 l1.7 1.5 l1.7 -1.5 l1.7 1.5 l1.7 -1.5 l1.7 1.5 l1.7 -1.5 l1.7 1.5 l1.7 -1.5 l1.7 1.5 l1.7 -1.5 l1.7 1.5 l1.7 -1.5 l1.7 1.5 l1.7 -1.5 l1.7 1.5 l1.7 -1.5 l1.7 1.5" fill="none" stroke="#d63b3b" stroke-width="0.8"/></svg>
</div>
<div class="r" style="left:49px;top:427.9px;width:144.5px;height:0.9px;background:#2fb4a6;"></div>
<div class="t" style="left:19.40px;top:453.89px;font-size:16.20px;color:#5a5a5a;">2</div>
<div class="t" style="left:19.40px;top:587.99px;font-size:16.20px;color:#5a5a5a;">3</div>
<div class="t" style="left:19.40px;top:722.09px;font-size:16.20px;color:#5a5a5a;">4</div>
<div class="t" style="left:19.40px;top:856.29px;font-size:16.20px;color:#5a5a5a;">5</div>
<div class="r" style="left:45px;top:457.2px;width:148.3px;height:111px;background:linear-gradient(180deg,#d7dbdb 0%,#cfe6e6 25%,#c3f3f3 55%,#e4fbfb 78%,#ffffff 95%);box-sizing:border-box;border:1px solid #c4c4c4;"></div>
<svg class="r" style="left:47px;top:459px;" width="15" height="18" viewBox="0 0 15 18"><path d="M0.3 0.3 H14.7 V14.6 L7.5 17.6 L0.3 14.6 Z" fill="#2aa79c"/><path d="M2 10.4 H13 L10.6 12.8 H4.4 Z M5.4 13 H9.6 L7.5 15 Z" fill="#e8f0b0"/><path d="M7.5 3.4 L8.6 5 H6.4 Z" fill="#c8f0e0"/></svg>
<div class="t" style="left:108.00px;top:468.91px;font-size:4.60px;color:#2a55b4;transform:scaleX(1.2193);font-weight:bold;filter:blur(0.3px);">Цінність релігії</div>
<div class="t" style="left:82.50px;top:475.91px;font-size:4.60px;color:#2a55b4;transform:scaleX(1.2250);filter:blur(0.3px);">(функціонально-структурний підхід)</div>
<svg class="r" style="left:70px;top:483.2px;" width="96" height="20" viewBox="0 0 96 20"><path d="M40 2 L2.6 15 M69 2 L93 17" stroke="#2cc0a0" stroke-width="0.9" fill="none"/><path d="M2 15.4 L5.4 12.6 L6 15.2 Z M93.6 17.4 L90 16.6 L91.8 14.4 Z" fill="#2cc0a0"/></svg>
<div class="t" style="left:60.00px;top:503.50px;font-size:3.90px;color:#111;transform:scaleX(0.9378);font-weight:bold;filter:blur(0.3px);">Функціональність релігії</div>
<div class="t" style="left:60.00px;top:508.92px;font-size:3.40px;color:#7a8a8a;filter:blur(0.3px);">інтегративна</div>
<div class="t" style="left:60.00px;top:513.62px;font-size:3.40px;color:#7a8a8a;transform:scaleX(0.9730);filter:blur(0.3px);">інтегративна ком</div>
<div class="t" style="left:60.00px;top:518.32px;font-size:3.40px;color:#7a8a8a;transform:scaleX(1.0243);filter:blur(0.3px);">інтегративна к</div>
<div class="t" style="left:60.00px;top:523.02px;font-size:3.40px;color:#7a8a8a;transform:scaleX(0.9523);filter:blur(0.3px);">інтегративна компе</div>
<div class="t" style="left:130.70px;top:503.50px;font-size:3.90px;color:#111;transform:scaleX(0.9089);font-weight:bold;filter:blur(0.3px);">Цінність віднесення релігії</div>
<div class="t" style="left:130.70px;top:508.92px;font-size:3.40px;color:#7a8a8a;transform:scaleX(0.9784);filter:blur(0.3px);">цінність релігійних погл</div>
<div class="t" style="left:130.70px;top:513.62px;font-size:3.40px;color:#7a8a8a;transform:scaleX(1.0056);filter:blur(0.3px);">цінність релігійних погл</div>
<div class="t" style="left:130.70px;top:518.32px;font-size:3.40px;color:#7a8a8a;transform:scaleX(1.0249);filter:blur(0.3px);">цінність релігійн</div>
<div class="t" style="left:130.70px;top:523.02px;font-size:3.40px;color:#7a8a8a;filter:blur(0.3px);">цінність релігійних поглядів,</div>
<div class="t" style="left:130.70px;top:527.72px;font-size:3.40px;color:#7a8a8a;transform:scaleX(0.9848);filter:blur(0.3px);">цінність релігійних погляд</div>
<div class="r" style="left:48px;top:561.4px;width:145px;height:0.9px;background:#2ec4a6;"></div>
<div class="r" style="left:45px;top:591.3px;width:148.3px;height:111px;background:linear-gradient(180deg,#d7dbdb 0%,#cfe6e6 25%,#c3f3f3 55%,#e4fbfb 78%,#ffffff 95%);box-sizing:border-box;border:1px solid #c4c4c4;"></div>
<svg class="r" style="left:47px;top:593.1px;" width="15" height="18" viewBox="0 0 15 18"><path d="M0.3 0.3 H14.7 V14.6 L7.5 17.6 L0.3 14.6 Z" fill="#2aa79c"/><path d="M2 10.4 H13 L10.6 12.8 H4.4 Z M5.4 13 H9.6 L7.5 15 Z" fill="#e8f0b0"/><path d="M7.5 3.4 L8.6 5 H6.4 Z" fill="#c8f0e0"/></svg>
<div class="t" style="left:108.00px;top:602.01px;font-size:4.60px;color:#2a55b4;transform:scaleX(1.2193);font-weight:bold;filter:blur(0.3px);">Цінність релігії</div>
<div class="t" style="left:57.00px;top:614.26px;font-size:3.00px;color:#111;transform:scaleX(1.2400);font-weight:bold;filter:blur(0.3px);">Психологічний вимір</div>
<div class="t" style="left:51.00px;top:618.16px;font-size:3.00px;color:#7f8f8f;transform:scaleX(0.9920);filter:blur(0.3px);">релігія є особливим духовним ст</div>
<div class="t" style="left:51.00px;top:622.06px;font-size:3.00px;color:#7f8f8f;transform:scaleX(0.9920);filter:blur(0.3px);">релігія є особливим духовним ст</div>
<div class="t" style="left:51.00px;top:625.96px;font-size:3.00px;color:#7f8f8f;transform:scaleX(0.9920);filter:blur(0.3px);">релігія є особливим духовним ст</div>
<div class="t" style="left:51.00px;top:629.86px;font-size:3.00px;color:#7f8f8f;transform:scaleX(0.9920);filter:blur(0.3px);">релігія є особливим духовним ст</div>
<div class="t" style="left:51.00px;top:633.76px;font-size:3.00px;color:#7f8f8f;transform:scaleX(1.0884);filter:blur(0.3px);">релігія є особл</div>
<div class="t" style="left:107.00px;top:614.26px;font-size:3.00px;color:#111;transform:scaleX(1.1446);font-weight:bold;filter:blur(0.3px);">Психологічний вимір</div>
<div class="t" style="left:101.00px;top:618.16px;font-size:3.00px;color:#7f8f8f;transform:scaleX(0.9884);filter:blur(0.3px);">релігія є особливим духовним </div>
<div class="t" style="left:101.00px;top:622.06px;font-size:3.00px;color:#7f8f8f;transform:scaleX(0.9884);filter:blur(0.3px);">релігія є особливим духовним </div>
<div class="t" style="left:101.00px;top:625.96px;font-size:3.00px;color:#7f8f8f;transform:scaleX(0.9884);filter:blur(0.3px);">релігія є особливим духовним </div>
<div class="t" style="left:101.00px;top:629.86px;font-size:3.00px;color:#7f8f8f;transform:scaleX(1.0833);filter:blur(0.3px);">релігія є осо</div>
<div class="t" style="left:154.00px;top:614.26px;font-size:3.00px;color:#111;transform:scaleX(1.0492);font-weight:bold;filter:blur(0.3px);">Психологічний вимір</div>
<div class="t" style="left:148.00px;top:618.16px;font-size:3.00px;color:#7f8f8f;transform:scaleX(0.9850);filter:blur(0.3px);">релігія є особливим духовни</div>
<div class="t" style="left:148.00px;top:622.06px;font-size:3.00px;color:#7f8f8f;transform:scaleX(0.9850);filter:blur(0.3px);">релігія є особливим духовни</div>
<div class="t" style="left:148.00px;top:625.96px;font-size:3.00px;color:#7f8f8f;transform:scaleX(0.9850);filter:blur(0.3px);">релігія є особливим духовни</div>
<div class="t" style="left:148.00px;top:629.86px;font-size:3.00px;color:#7f8f8f;transform:scaleX(0.9850);filter:blur(0.3px);">релігія є особливим духовни</div>
<div class="t" style="left:148.00px;top:633.76px;font-size:3.00px;color:#7f8f8f;transform:scaleX(0.9850);filter:blur(0.3px);">релігія є особливим духовни</div>
<div class="t" style="left:148.00px;top:637.66px;font-size:3.00px;color:#7f8f8f;transform:scaleX(1.0654);filter:blur(0.3px);">релігія є особл</div>
<div class="t" style="left:59.00px;top:646.76px;font-size:3.00px;color:#111;transform:scaleX(1.1128);font-weight:bold;filter:blur(0.3px);">Психологічний вимір</div>
<div class="t" style="left:53.00px;top:650.66px;font-size:3.00px;color:#7f8f8f;transform:scaleX(0.9842);filter:blur(0.3px);">релігія є особливим духовним</div>
<div class="t" style="left:53.00px;top:654.56px;font-size:3.00px;color:#7f8f8f;transform:scaleX(1.1072);filter:blur(0.3px);">релігія є осо</div>
<div class="t" style="left:110.00px;top:647.26px;font-size:3.00px;color:#111;transform:scaleX(0.9538);font-weight:bold;filter:blur(0.3px);">Психологічний вимір</div>
<div class="t" style="left:104.00px;top:651.16px;font-size:3.00px;color:#7f8f8f;transform:scaleX(0.9928);filter:blur(0.3px);">релігія є особливим духов</div>
<div class="t" style="left:104.00px;top:655.06px;font-size:3.00px;color:#7f8f8f;transform:scaleX(0.9928);filter:blur(0.3px);">релігія є особливим духов</div>
<div class="t" style="left:104.00px;top:658.96px;font-size:3.00px;color:#7f8f8f;transform:scaleX(0.9928);filter:blur(0.3px);">релігія є особливим духов</div>
<div class="t" style="left:104.00px;top:662.86px;font-size:3.00px;color:#7f8f8f;transform:scaleX(0.9928);filter:blur(0.3px);">релігія є особливим духов</div>
<div class="t" style="left:104.00px;top:666.76px;font-size:3.00px;color:#7f8f8f;transform:scaleX(0.9928);filter:blur(0.3px);">релігія є особливим духов</div>
<div class="t" style="left:104.00px;top:670.66px;font-size:3.00px;color:#7f8f8f;transform:scaleX(0.9928);filter:blur(0.3px);">релігія є особливим духов</div>
<div class="t" style="left:104.00px;top:674.56px;font-size:3.00px;color:#7f8f8f;transform:scaleX(0.9928);filter:blur(0.3px);">релігія є особливим духов</div>
<div class="t" style="left:104.00px;top:678.46px;font-size:3.00px;color:#7f8f8f;transform:scaleX(0.9928);filter:blur(0.3px);">релігія є особливим духов</div>
<div class="t" style="left:104.00px;top:682.36px;font-size:3.00px;color:#7f8f8f;transform:scaleX(1.2550);filter:blur(0.3px);">релігія є </div>
<div class="t" style="left:154.00px;top:649.76px;font-size:3.00px;color:#111;transform:scaleX(0.9856);font-weight:bold;filter:blur(0.3px);">Психологічний вимір</div>
<div class="t" style="left:148.00px;top:653.66px;font-size:3.00px;color:#7f8f8f;transform:scaleX(0.9758);filter:blur(0.3px);">релігія є особливим духовн</div>
<div class="t" style="left:148.00px;top:657.56px;font-size:3.00px;color:#7f8f8f;transform:scaleX(0.9758);filter:blur(0.3px);">релігія є особливим духовн</div>
<div class="t" style="left:148.00px;top:661.46px;font-size:3.00px;color:#7f8f8f;transform:scaleX(0.9758);filter:blur(0.3px);">релігія є особливим духовн</div>
<div class="t" style="left:148.00px;top:665.36px;font-size:3.00px;color:#7f8f8f;transform:scaleX(0.9758);filter:blur(0.3px);">релігія є особливим духовн</div>
<div class="t" style="left:148.00px;top:669.26px;font-size:3.00px;color:#7f8f8f;transform:scaleX(0.9758);filter:blur(0.3px);">релігія є особливим духовн</div>
<div class="t" style="left:148.00px;top:673.16px;font-size:3.00px;color:#7f8f8f;transform:scaleX(0.9758);filter:blur(0.3px);">релігія є особливим духовн</div>
<div class="t" style="left:148.00px;top:677.06px;font-size:3.00px;color:#7f8f8f;transform:scaleX(0.9758);filter:blur(0.3px);">релігія є особливим духовн</div>
<div class="t" style="left:148.00px;top:680.96px;font-size:3.00px;color:#7f8f8f;transform:scaleX(0.9758);filter:blur(0.3px);">релігія є особливим духовн</div>
<div class="t" style="left:148.00px;top:684.86px;font-size:3.00px;color:#7f8f8f;transform:scaleX(0.9758);filter:blur(0.3px);">релігія є особливим духовн</div>
<div class="t" style="left:148.00px;top:688.76px;font-size:3.00px;color:#7f8f8f;transform:scaleX(1.1018);filter:blur(0.3px);">релігія є особ</div>
<div class="r" style="left:48px;top:695.5px;width:145px;height:0.9px;background:#2ec4a6;"></div>
<div class="r" style="left:45px;top:725.4px;width:148.3px;height:111px;background:linear-gradient(180deg,#d7dbdb 0%,#cfe6e6 25%,#c3f3f3 55%,#e4fbfb 78%,#ffffff 95%);box-sizing:border-box;border:1px solid #c4c4c4;"></div>
<svg class="r" style="left:47px;top:727.2px;" width="15" height="18" viewBox="0 0 15 18"><path d="M0.3 0.3 H14.7 V14.6 L7.5 17.6 L0.3 14.6 Z" fill="#2aa79c"/><path d="M2 10.4 H13 L10.6 12.8 H4.4 Z M5.4 13 H9.6 L7.5 15 Z" fill="#e8f0b0"/><path d="M7.5 3.4 L8.6 5 H6.4 Z" fill="#c8f0e0"/></svg>
<div class="t" style="left:74.00px;top:734.53px;font-size:4.10px;color:#2a55b4;transform:scaleX(1.0927);font-weight:bold;filter:blur(0.3px);">Результати роботи студентських колективу</div>
<div class="t" style="left:68.00px;top:740.13px;font-size:4.10px;color:#2a55b4;transform:scaleX(1.1050);font-weight:bold;filter:blur(0.3px);">Київського університету імені Бориса Грінченка</div>
<div class="t" style="left:92.00px;top:746.53px;font-size:4.10px;color:#2a55b4;transform:scaleX(1.0692);font-weight:bold;filter:blur(0.3px);">відповідальні за напрямки:</div>
<div class="r" style="left:55px;top:759.8px;width:44px;height:18.4px;background:#13b9aa;box-sizing:border-box;border:0.8px solid #0b8f86;"></div>
<div class="t" style="left:58.93px;top:762.29px;font-size:3.20px;color:#0a2a30;transform:scaleX(0.8376);font-weight:bold;filter:blur(0.3px);">студенти проводили опиту</div>
<div class="t" style="left:59.84px;top:766.69px;font-size:3.20px;color:#4fd8cc;transform:scaleX(0.9452);filter:blur(0.3px);">студенти проводили опи</div>
<div class="t" style="left:60.11px;top:771.09px;font-size:3.20px;color:#4fd8cc;transform:scaleX(0.9303);filter:blur(0.3px);">студенти проводили опи</div>
<div class="r" style="left:126px;top:758.6px;width:45.2px;height:24.2px;background:#13b9aa;box-sizing:border-box;border:0.8px solid #0b8f86;"></div>
<div class="t" style="left:135.54px;top:761.09px;font-size:3.20px;color:#0a2a30;transform:scaleX(0.8422);font-weight:bold;filter:blur(0.3px);">студенти проводил</div>
<div class="t" style="left:133.05px;top:765.49px;font-size:3.20px;color:#0a2a30;transform:scaleX(0.8681);font-weight:bold;filter:blur(0.3px);">студенти проводили о</div>
<div class="t" style="left:135.11px;top:769.89px;font-size:3.20px;color:#0a2a30;transform:scaleX(0.8701);font-weight:bold;filter:blur(0.3px);">студенти проводил</div>
<div class="t" style="left:135.93px;top:774.29px;font-size:3.20px;color:#4fd8cc;transform:scaleX(0.9569);filter:blur(0.3px);">студенти проводи</div>
<div class="t" style="left:136.46px;top:778.69px;font-size:3.20px;color:#4fd8cc;transform:scaleX(0.9172);filter:blur(0.3px);">студенти проводи</div>
<div class="r" style="left:55px;top:787.6px;width:44px;height:28.6px;background:#13b9aa;box-sizing:border-box;border:0.8px solid #0b8f86;"></div>
<div class="t" style="left:64.35px;top:790.09px;font-size:3.20px;color:#0a2a30;transform:scaleX(0.8733);font-weight:bold;filter:blur(0.3px);">студенти проводи</div>
<div class="t" style="left:58.86px;top:794.49px;font-size:3.20px;color:#0a2a30;transform:scaleX(0.8410);font-weight:bold;filter:blur(0.3px);">студенти проводили опиту</div>
<div class="t" style="left:59.62px;top:798.89px;font-size:3.20px;color:#0a2a30;transform:scaleX(0.8421);font-weight:bold;filter:blur(0.3px);">студенти проводили опит</div>
<div class="t" style="left:59.79px;top:803.29px;font-size:3.20px;color:#4fd8cc;transform:scaleX(0.9479);filter:blur(0.3px);">студенти проводили опи</div>
<div class="t" style="left:59.84px;top:807.69px;font-size:3.20px;color:#4fd8cc;transform:scaleX(0.9452);filter:blur(0.3px);">студенти проводили опи</div>
<div class="r" style="left:126px;top:787.6px;width:45.2px;height:28.6px;background:#13b9aa;box-sizing:border-box;border:0.8px solid #0b8f86;"></div>
<div class="t" style="left:135.77px;top:790.09px;font-size:3.20px;color:#0a2a30;transform:scaleX(0.8276);font-weight:bold;filter:blur(0.3px);">студенти проводил</div>
<div class="t" style="left:134.85px;top:794.49px;font-size:3.20px;color:#0a2a30;transform:scaleX(0.8341);font-weight:bold;filter:blur(0.3px);">студенти проводили</div>
<div class="t" style="left:132.34px;top:798.89px;font-size:3.20px;color:#0a2a30;transform:scaleX(0.8615);font-weight:bold;filter:blur(0.3px);">студенти проводили оп</div>
<div class="t" style="left:131.51px;top:803.29px;font-size:3.20px;color:#0a2a30;transform:scaleX(0.8606);font-weight:bold;filter:blur(0.3px);">студенти проводили опи</div>
<div class="t" style="left:130.54px;top:807.69px;font-size:3.20px;color:#4fd8cc;transform:scaleX(0.9163);filter:blur(0.3px);">студенти проводили опиту</div>
<div class="t" style="left:130.34px;top:812.09px;font-size:3.20px;color:#4fd8cc;transform:scaleX(0.9265);filter:blur(0.3px);">студенти проводили опиту</div>
<div class="r" style="left:48px;top:830.8px;width:145px;height:0.9px;background:#2ec4a6;"></div>
<div class="r" style="left:45px;top:859.6px;width:148.3px;height:51.4px;overflow:hidden;">
<div class="r" style="left:0;top:0;width:148.3px;height:111px;box-sizing:border-box;border:1px solid #c4c4c4;background:linear-gradient(180deg,#d7dbdb 0%,#cfe6e6 25%,#c3f3f3 55%,#e4fbfb 78%,#ffffff 95%);"></div>
</div>
<svg class="r" style="left:47px;top:861.4px;" width="15" height="18" viewBox="0 0 15 18"><path d="M0.3 0.3 H14.7 V14.6 L7.5 17.6 L0.3 14.6 Z" fill="#2aa79c"/><path d="M2 10.4 H13 L10.6 12.8 H4.4 Z M5.4 13 H9.6 L7.5 15 Z" fill="#e8f0b0"/><path d="M7.5 3.4 L8.6 5 H6.4 Z" fill="#c8f0e0"/></svg>
<div class="t" style="left:72.00px;top:864.78px;font-size:6.40px;color:#3a62b8;transform:scaleX(1.1047);filter:blur(0.3px);">Інформаційний блок проведеного</div>
<div class="t" style="left:108.00px;top:873.78px;font-size:6.40px;color:#3a62b8;transform:scaleX(1.0832);filter:blur(0.3px);">опитування:</div>
<div class="t" style="left:108.00px;top:884.21px;font-size:3.30px;color:#111;transform:scaleX(1.1152);font-weight:bold;filter:blur(0.3px);">Всього опитано - 510 осіб</div>
<div class="t" style="left:71.00px;top:892.09px;font-size:3.20px;color:#566;transform:scaleX(1.1733);filter:blur(0.3px);">Чоловіки - 208</div>
<div class="t" style="left:101.00px;top:892.09px;font-size:3.20px;color:#e06a7a;transform:scaleX(1.1602);filter:blur(0.3px);">(41,1%)</div>
<div class="t" style="left:129.00px;top:892.09px;font-size:3.20px;color:#566;transform:scaleX(1.2497);filter:blur(0.3px);">Жінки - 302</div>
<div class="t" style="left:154.00px;top:892.09px;font-size:3.20px;color:#e06a7a;transform:scaleX(1.1602);filter:blur(0.3px);">(59,9%)</div>
<div class="t" style="left:71.00px;top:898.61px;font-size:3.30px;color:#111;transform:scaleX(1.0702);font-weight:bold;filter:blur(0.3px);">Вік опитаних складає:</div>
<div class="t" style="left:71.00px;top:906.09px;font-size:3.20px;color:#566;transform:scaleX(1.2010);filter:blur(0.3px);">18-30рр. - 458</div>
<div class="t" style="left:101.00px;top:906.09px;font-size:3.20px;color:#e06a7a;transform:scaleX(1.1602);filter:blur(0.3px);">(89,7%)</div>
<div class="r" style="left:516.5px;top:313.5px;width:713px;height:534.5px;background:#d0d0d0;"></div>
<div class="r" style="left:517.5px;top:314.5px;width:711px;height:532.5px;overflow:hidden;background:#fff;">
<div class="r" style="left:0px;top:0px;width:711px;height:94.6px;background:#04dace;"></div>
<div class="r" style="left:0px;top:219px;width:711px;height:153.2px;background:linear-gradient(180deg,#06d0c4 0%,#05c4b8 35%,#04b4a9 70%,#03a69c 100%);"></div>
<div class="r" style="left:0px;top:372px;width:711px;height:160.5px;background:linear-gradient(180deg,#d3fdfd 0%,#dcfefe 35%,#eeffff 65%,#ffffff 88%);"></div>
<svg class="r" style="left:112px;top:371.6px;" width="60" height="27" viewBox="0 0 60 27"><path d="M4.5 0 H55 L31.6 23.2 Q29.8 24.8 28 23.2 Z" fill="#04a89e"/></svg>
<div class="r" style="left:12.3px;top:505.2px;width:698.7px;height:1.5px;background:#39b9ad;"></div>
<svg class="r" style="left:0px;top:94.1px;" width="711" height="125" viewBox="0 0 711 125"><defs><filter id="pb" x="-2%" y="-5%" width="104%" height="110%"><feGaussianBlur stdDeviation="0.7"/></filter><filter id="pb2" x="-5%" y="-10%" width="110%" height="120%"><feGaussianBlur stdDeviation="2.2"/></filter><linearGradient id="sk2" x1="0" y1="0" x2="0" y2="1"><stop offset="0" stop-color="#2f66b4"/><stop offset="1" stop-color="#4c8ad6"/></linearGradient><linearGradient id="sk1" x1="0" y1="0" x2="0" y2="1"><stop offset="0" stop-color="#cfe0f0"/><stop offset="1" stop-color="#f3f5f6"/></linearGradient></defs><g filter="url(#pb)"><rect x="0" y="0" width="148" height="125" fill="#f1f4f7"/><g filter="url(#pb2)"><ellipse cx="32" cy="13" rx="22" ry="4" fill="#9cc4e8"/><ellipse cx="112" cy="4" rx="18" ry="4" fill="#a6cbea"/><ellipse cx="20" cy="28" rx="14" ry="4" fill="#c3dcf0"/><ellipse cx="120" cy="52" rx="12" ry="6" fill="#dfe9c8"/><ellipse cx="84" cy="48" rx="22" ry="7" fill="#e6efd8"/></g><rect x="13" y="58" width="43" height="45" fill="#dfe0e2"/><rect x="112" y="58" width="36" height="45" fill="#e4e4e2"/><rect x="14" y="60" width="40" height="10" fill="#c9ccd2"/><rect x="14.6" y="73" width="23.4" height="22.4" fill="#636a72"/><rect x="22" y="74" width="2" height="21" fill="#c9cdd0"/><rect x="27" y="74" width="7" height="21" fill="#98a4a8"/><rect x="42" y="75" width="5.6" height="9.6" fill="#4a5a80"/><rect x="56" y="57.5" width="56" height="7.5" fill="#565c66"/><rect x="57" y="65" width="54" height="39" fill="#d3d3d4"/><rect x="57" y="65" width="54" height="8" fill="#c4c2be"/><rect x="60" y="92" width="46" height="11" fill="#f3f3f5"/><rect x="62" y="75" width="6.4" height="16.4" fill="#7c7c78"/><rect x="70.6" y="75" width="3.6" height="16.4" fill="#7c7c78"/><rect x="76" y="75" width="6" height="16.4" fill="#7c7c78"/><rect x="84.4" y="75" width="6" height="16.4" fill="#7c7c78"/><rect x="93" y="75" width="3.6" height="16.4" fill="#7c7c78"/><rect x="98.6" y="75" width="6" height="16.4" fill="#7c7c78"/><rect x="116" y="74.6" width="11" height="9.6" fill="#5b6676"/><rect x="131" y="74.6" width="11" height="9.6" fill="#8f917e"/><rect x="114" y="86" width="32" height="2" fill="#c4c4c2"/><g filter="url(#pb)"><path d="M0 2 C8 6 12 14 11 24 C16 30 12 40 14 48 C22 52 24 58 16 62 C12 70 14 84 13 100 H0 Z" fill="#3f4d33"/><path d="M0 66 H13 V100 H0 Z" fill="#5b5f4c"/></g><rect x="0" y="103" width="148" height="22" fill="#aeb0b8"/><path d="M0 116 H148 V125 H0 Z" fill="#d2d3d6"/><rect x="0" y="96" width="38" height="14" fill="#50524c"/><rect x="112" y="100" width="36" height="8" fill="#7a7d74"/><rect x="56" y="103" width="56" height="8" fill="#9ea0aa"/><rect x="22" y="107" width="4" height="8" fill="#e8e8e8"/><rect x="41" y="108" width="7" height="7" fill="#f0f0f0"/><rect x="115" y="108" width="7" height="8" fill="#f0f0f0"/><path d="M39.5 36.7 C54.2 -7.124 108.8 -7.124 123.5 36.7" fill="none" stroke="#4e5d80" stroke-width="1.15" opacity="0.95"/><path d="M43.5 40.3 C56.8 1.624 106.2 1.624 119.5 40.3" fill="none" stroke="#4e5d80" stroke-width="1.15" opacity="0.88"/><path d="M47.5 43.9 C59.4 11.032 103.6 11.032 115.5 43.9" fill="none" stroke="#4e5d80" stroke-width="1.15" opacity="0.81"/><path d="M51.5 47.5 C62 20.44 101 20.44 111.5 47.5" fill="none" stroke="#4e5d80" stroke-width="1.15" opacity="0.74"/><path d="M55.5 51.1 C64.6 28.528 98.4 28.528 107.5 51.1" fill="none" stroke="#4e5d80" stroke-width="1.15" opacity="0.67"/><path d="M59.5 54.7 C67.2 36.616 95.8 36.616 103.5 54.7" fill="none" stroke="#4e5d80" stroke-width="1.15" opacity="0.6"/><path d="M80.2 10.5 Q52.9 30 51.5 56" fill="none" stroke="#4e5d80" stroke-width="1.15" opacity="0.9"/><path d="M81.5 4 Q81.5 30 81.5 56" fill="none" stroke="#4e5d80" stroke-width="1.15" opacity="0.9"/><path d="M82.7 10 Q107.9 30 111.5 56" fill="none" stroke="#4e5d80" stroke-width="1.15" opacity="0.9"/><path d="M57 16 Q66 34 64 56 M105 14 Q100 34 104 56" fill="none" stroke="#4e5d80" stroke-width="1.15" opacity="0.85"/><path d="M4.8 36.7 C9 19 31 19 39.7 36.7" fill="none" stroke="#4e5d80" stroke-width="1.15" opacity="0.9"/><path d="M123.4 36.7 C131 23.5 146 23.5 151 34" fill="none" stroke="#4e5d80" stroke-width="1.15" opacity="0.9"/><path d="M7.3 39.7 C11.5 23.5 32.5 23.5 43.7 41.7" fill="none" stroke="#4e5d80" stroke-width="1.15" opacity="0.9"/><path d="M119.4 41.7 C130 27.5 144 27.5 149 38" fill="none" stroke="#4e5d80" stroke-width="1.15" opacity="0.9"/><path d="M9.8 42.7 C14 28 34 28 47.7 46.7" fill="none" stroke="#4e5d80" stroke-width="1.15" opacity="0.9"/><path d="M115.4 46.7 C129 31.5 142 31.5 147 42" fill="none" stroke="#4e5d80" stroke-width="1.15" opacity="0.9"/><path d="M12.3 45.7 C16.5 32.5 35.5 32.5 51.7 51.7" fill="none" stroke="#4e5d80" stroke-width="1.15" opacity="0.9"/><path d="M111.4 51.7 C128 35.5 140 35.5 145 46" fill="none" stroke="#4e5d80" stroke-width="1.15" opacity="0.9"/><path d="M5 37 C20 44 40 50 56 58 M39.7 36.7 C46 44 52 52 56 57.5 M123.4 36.7 C118 44 114 52 111 57.5 M148 40 C136 46 122 52 111 58" fill="none" stroke="#4e5d80" stroke-width="1.15" opacity="0.9"/><path d="M8 44 H56 M112 46 H148 M52 44 H112" fill="none" stroke="#4e5d80" stroke-width="1.15" opacity="0.55"/><path d="M39.7 60 V120 M123.4 60 V120" stroke="#3b5cae" stroke-width="1.5"/><path d="M32 61 H40 M123 62 H136" stroke="#3b5cae" stroke-width="1.1"/><rect x="147" y="0" width="130" height="125" fill="url(#sk2)"/><g filter="url(#pb2)"><ellipse cx="246" cy="13" rx="34" ry="15" fill="#f4f6fa"/><ellipse cx="200" cy="20" rx="12" ry="5" fill="#dfe8f4"/><ellipse cx="222" cy="30" rx="10" ry="6" fill="#e8edf5"/><ellipse cx="152" cy="30" rx="8" ry="30" fill="#e6ecf0" opacity="0.9"/></g><path d="M147 62 L225 44 V125 H147 Z" fill="#d9ceb2"/><path d="M147 62 L225 44 V50 L147 67 Z" fill="#8a8478"/><path d="M147 86 L225 80 V84 L147 90 Z" fill="#b3a88e"/><rect x="152" y="70" width="4.6" height="14" fill="#5c5c58"/><rect x="152" y="96" width="3.6" height="12" fill="#4e4e4a"/><rect x="161" y="67.9" width="4.6" height="14" fill="#5c5c58"/><rect x="161" y="95.4" width="3.6" height="12" fill="#4e4e4a"/><rect x="170" y="65.8" width="4.6" height="14" fill="#5c5c58"/><rect x="170" y="94.8" width="3.6" height="12" fill="#4e4e4a"/><rect x="179" y="63.7" width="4.6" height="14" fill="#5c5c58"/><rect x="179" y="94.2" width="3.6" height="12" fill="#4e4e4a"/><rect x="188" y="61.6" width="4.6" height="14" fill="#5c5c58"/><rect x="188" y="93.6" width="3.6" height="12" fill="#4e4e4a"/><rect x="197" y="59.5" width="4.6" height="14" fill="#5c5c58"/><rect x="197" y="93" width="3.6" height="12" fill="#4e4e4a"/><rect x="206" y="57.4" width="4.6" height="14" fill="#5c5c58"/><rect x="206" y="92.4" width="3.6" height="12" fill="#4e4e4a"/><rect x="215" y="55.3" width="4.6" height="14" fill="#5c5c58"/><rect x="215" y="91.8" width="3.6" height="12" fill="#4e4e4a"/><path d="M224 27 L276 14.7 V125 H224 Z" fill="#e3d7b8"/><path d="M224 27 L276 14.7 V20 L224 32 Z" fill="#cfc4a8"/><path d="M226 34 L276 23 V38 L226 44 Z" fill="#b9ae92"/><path d="M230.5 74 V56 A3 3 0 0 1 236.5 56 V74 Z" fill="#4a4640"/><path d="M239.9 74 V56 A3 3 0 0 1 245.9 56 V74 Z" fill="#4a4640"/><path d="M250 74 V56 A3 3 0 0 1 256 56 V74 Z" fill="#4a4640"/><rect x="225" y="70" width="46" height="9" fill="#efe5cb"/><rect x="228" y="84" width="34" height="41" fill="#e9dfc6"/><rect x="264" y="20" width="12" height="105" fill="#c9bd9f"/><path d="M238 125 V99 A5 5.6 0 0 1 248 99 V125 Z" fill="#4f342b"/><path d="M216 82 L223.6 80 L222.6 94 L216 92 Z" fill="#27408c"/><rect x="257.6" y="102.8" width="5.4" height="6.2" fill="#2f62c0"/><path d="M147 113 C160 107 188 110 204 120 V125 H147 Z" fill="#2b2d30"/><rect x="275.5" y="0" width="132.5" height="125" fill="#2a63c0"/><g filter="url(#pb2)"><ellipse cx="282" cy="14" rx="8" ry="14" fill="#e6ebf2"/></g><rect x="275.5" y="24" width="30.5" height="101" fill="#f0ece3"/><rect x="296" y="22" width="11" height="90" fill="#f3efe6"/><rect x="297" y="9" width="9" height="14" fill="#f0ece2"/><path d="M298 9 L301.5 4 L305 9 Z" fill="#31446e"/><rect x="298.6" y="28" width="5.6" height="60" fill="#56627c"/><rect x="292" y="35" width="3" height="5.4" fill="#8a8e98"/><rect x="292" y="47" width="3" height="5.4" fill="#8a8e98"/><rect x="292" y="59" width="3" height="5.4" fill="#8a8e98"/><rect x="292" y="72" width="3" height="5.4" fill="#8a8e98"/><path d="M311 100 V36 C320 14 392 8 404 26 V100 Z" fill="#f1e9da"/><path d="M311 36 C322 18 392 12 404 30 V34 C392 18 322 24 311 42 Z" fill="#d9cfbc"/><path d="M345 8 L349 3 L353 8 Z" fill="#31446e"/><path d="M330 40 H378 M330 47 H378" stroke="#6a6258" stroke-width="1.8" stroke-dasharray="4 1 3 1"/><path d="M314 66 C330 58 390 58 404 64 V100 H314 Z" fill="#5b2e2e"/><rect x="318" y="62" width="3.6" height="40" fill="#efe8dc"/><rect x="328" y="62" width="3.6" height="40" fill="#efe8dc"/><rect x="338" y="62" width="3.6" height="40" fill="#efe8dc"/><rect x="349" y="62" width="3.6" height="40" fill="#efe8dc"/><rect x="360" y="62" width="3.6" height="40" fill="#efe8dc"/><rect x="371" y="62" width="3.6" height="40" fill="#efe8dc"/><rect x="382" y="62" width="3.6" height="40" fill="#efe8dc"/><rect x="393" y="62" width="3.6" height="40" fill="#efe8dc"/><path d="M311 56 C330 50 392 50 404 54 V62 C392 58 330 58 311 66 Z" fill="#f4eee2"/><path d="M275.5 100 H408 V125 H275.5 Z" fill="#82a34c"/><path d="M275.5 99 C300 96 330 98 352 103 V108 H275.5 Z" fill="#d9dccf"/><ellipse cx="398" cy="104" rx="22" ry="12" fill="#8a9a3c"/><ellipse cx="330" cy="101" rx="30" ry="4" fill="#5e7a3a"/><rect x="402" y="0" width="150" height="125" fill="#c8aa70"/><path d="M402 0 H440 L420 14 V60 H402 Z" fill="#2d66c2"/><g filter="url(#pb2)"><ellipse cx="422" cy="12" rx="12" ry="9" fill="#eef1f6"/><rect x="404" y="20" width="16" height="70" fill="#c4c8d0" opacity="0.9"/></g><path d="M418 16 L442 2 H552 V125 H418 Z" fill="#c9ab72"/><path d="M420 50 L552 32 M420 84 L552 76" stroke="#ab8f5c" stroke-width="1.6"/><rect x="430" y="13.42" width="6.4" height="20" fill="#efeff2"/><rect x="444" y="11.88" width="6.4" height="20" fill="#efeff2"/><rect x="458" y="10.34" width="6.4" height="20" fill="#efeff2"/><rect x="472" y="8.8" width="6.4" height="20" fill="#efeff2"/><rect x="486" y="7.26" width="6.4" height="20" fill="#efeff2"/><rect x="503" y="5.39" width="6.4" height="20" fill="#efeff2"/><rect x="520" y="3.52" width="6.4" height="20" fill="#efeff2"/><rect x="430" y="47.42" width="6.4" height="22" fill="#efeff2"/><rect x="444" y="45.88" width="6.4" height="22" fill="#efeff2"/><rect x="458" y="44.34" width="6.4" height="22" fill="#efeff2"/><rect x="472" y="42.8" width="6.4" height="22" fill="#efeff2"/><rect x="486" y="41.26" width="6.4" height="22" fill="#efeff2"/><rect x="503" y="39.39" width="6.4" height="22" fill="#efeff2"/><rect x="520" y="37.52" width="6.4" height="22" fill="#efeff2"/><rect x="430" y="74.684" width="6.4" height="24" fill="#efeff2"/><rect x="444" y="74.376" width="6.4" height="24" fill="#efeff2"/><rect x="458" y="74.068" width="6.4" height="24" fill="#efeff2"/><rect x="472" y="73.76" width="6.4" height="24" fill="#efeff2"/><rect x="486" y="73.452" width="6.4" height="24" fill="#efeff2"/><rect x="503" y="73.078" width="6.4" height="24" fill="#efeff2"/><rect x="520" y="72.704" width="6.4" height="24" fill="#efeff2"/><rect x="520" y="4" width="14" height="24" fill="#f1f1f4"/><rect x="540" y="6" width="12" height="26" fill="#f1f1f4"/><rect x="519" y="40" width="14" height="30" fill="#ececf0"/><rect x="540" y="44" width="12" height="34" fill="#ececf0"/><rect x="519" y="84" width="14" height="24" fill="#ececf0"/><rect x="540" y="88" width="12" height="24" fill="#ececf0"/><path d="M436 40 L498 30 V118 H436 Z" fill="#f1f2f6"/><path d="M434 40 L500 29 V36 L434 46 Z" fill="#fbfbfd"/><rect x="443" y="48" width="6" height="62" fill="#fff"/><rect x="457" y="48" width="6" height="62" fill="#fff"/><rect x="470" y="48" width="6" height="62" fill="#fff"/><rect x="484" y="48" width="6" height="62" fill="#fff"/><rect x="450" y="56" width="5.6" height="22" fill="#8f95a6"/><rect x="450" y="92" width="5" height="18" fill="#7d8498"/><rect x="463" y="56" width="5.6" height="22" fill="#8f95a6"/><rect x="463" y="92" width="5" height="18" fill="#7d8498"/><rect x="477" y="56" width="5.6" height="22" fill="#8f95a6"/><rect x="477" y="92" width="5" height="18" fill="#7d8498"/><path d="M497 40 L505 62 L500 62 Z" fill="#e2c42c"/><path d="M500 34 L508 58 L504 58 Z" fill="#5f5a8a"/><path d="M524 40 C516 60 512 100 514 122 H538 C540 100 534 60 524 40 Z" fill="#4f6d43"/><rect x="418" y="110" width="134" height="15" fill="#c9c3b6"/><rect x="470" y="112" width="54" height="13" fill="#d9d6ce"/><rect x="550" y="0" width="161" height="125" fill="#e3e6ea"/><path d="M556 62 L632 12 H711 V92 H556 Z" fill="#e9e5d8"/><path d="M556 62 L580 48 V60 L556 72 Z" fill="#cfd3d6"/><path d="M560 78 H640 V90 H560 Z" fill="#8f9498"/><rect x="562" y="78" width="2.4" height="12" fill="#e8e8e6"/><rect x="569" y="78" width="2.4" height="12" fill="#e8e8e6"/><rect x="576" y="78" width="2.4" height="12" fill="#e8e8e6"/><rect x="583" y="78" width="2.4" height="12" fill="#e8e8e6"/><rect x="590" y="78" width="2.4" height="12" fill="#e8e8e6"/><rect x="597" y="78" width="2.4" height="12" fill="#e8e8e6"/><rect x="604" y="78" width="2.4" height="12" fill="#e8e8e6"/><rect x="611" y="78" width="2.4" height="12" fill="#e8e8e6"/><rect x="618" y="78" width="2.4" height="12" fill="#e8e8e6"/><rect x="625" y="78" width="2.4" height="12" fill="#e8e8e6"/><rect x="632" y="78" width="2.4" height="12" fill="#e8e8e6"/><rect x="639" y="78" width="2.4" height="12" fill="#e8e8e6"/><rect x="556" y="88" width="90" height="6" fill="#f1f1ee"/><path d="M640 22 L711 4 V58 L640 72 Z" fill="#e4e2da"/><path d="M652 24 L706 8 V44 L652 56 Z" fill="#aab4bf"/><path d="M660 19.68 V52.24" stroke="#e9e9e6" stroke-width="1.6"/><path d="M670 16.78 V50.04" stroke="#e9e9e6" stroke-width="1.6"/><path d="M682 13.3 V47.4" stroke="#e9e9e6" stroke-width="1.6"/><path d="M694 9.82 V44.76" stroke="#e9e9e6" stroke-width="1.6"/><path d="M652 38 L706 24" stroke="#e9e9e6" stroke-width="1.4"/><rect x="664" y="62" width="47" height="28" fill="#dcdcd6"/><rect x="690" y="64" width="21" height="16" fill="#59605a"/><g filter="url(#pb)"><g transform="translate(22 0)"><path d="M610 2 C596 20 596 50 604 74 C612 92 630 92 634 70 C640 40 630 14 610 2 Z" fill="#90803a"/><ellipse cx="612" cy="40" rx="8" ry="22" fill="#b9962e" opacity="0.8"/></g><path d="M644 36 C632 52 634 84 644 92 C656 90 660 56 644 36 Z" fill="#7b7a3a" transform="translate(18 0)"/><path d="M676 34 C664 50 666 80 676 90 C690 84 690 52 676 34 Z" fill="#6d7440" transform="translate(8 0)"/></g><rect x="550" y="92" width="161" height="33" fill="#a5a6a0"/><path d="M606 90 H711 V106 H606 Z" fill="#3f4a32"/><path d="M550 108 H711 V125 H550 Z" fill="#9b9c98"/><path d="M560 112 L700 100" stroke="#b9b9b2" stroke-width="3" opacity="0.5"/></g><g filter="url(#pb2)" opacity="0.55"><rect x="145" y="0" width="5" height="125" fill="#d0d8e4"/><rect x="404" y="30" width="8" height="95" fill="#c8c0b0"/><rect x="548" y="0" width="6" height="125" fill="#d8d8d4"/></g></svg>
<svg class="r" style="left:5.1px;top:5.4px;" width="71.6" height="88.4" viewBox="0 0 71.6 88.4"><path d="M0.6 0.6 H71 V73.6 L35.8 87.8 L0.6 73.6 Z" fill="#17a39f" stroke="#9fdc5a" stroke-width="1.1"/><path d="M4.6 6.4 H67 M4.6 12 H67" stroke="#9ee6d6" stroke-width="1.7" stroke-dasharray="3.2 0.9 1.8 0.7 2.6 0.8" opacity="0.85"/><path d="M4.4 17.2 H67.2" stroke="#bfe77e" stroke-width="1.3"/><path d="M35.4 21.6 L40.4 27.6 H30.6 Z" fill="#f1eec0"/><path d="M30 29.6 L9.4 50.8 M41.2 29.6 L62.4 50.8 M30 29.6 L35.5 31 L41.2 29.6 M35.5 31 V50" fill="none" stroke="#9be3de" stroke-width="0.9"/><path d="M12 50 C20 46 30 47 35.5 51 C41 47 51 46 60 50" fill="none" stroke="#9be3de" stroke-width="0.9"/><path d="M12 51.4 H60" stroke="#7fd09a" stroke-width="0.8"/><path d="M5.2 56.8 L10 53.2 H33.4 L26 58.6 H5.2 Z M67 56.8 L62 53.2 H38.4 L46 58.6 H67 Z" fill="#f0eaa0"/><path d="M10.6 68.4 L15.4 60.6 L31.6 56.6 L23 67.4 Z M61.4 68.4 L56.4 60.6 L40.2 56.6 L48.6 67.4 Z" fill="#f3e98f"/><path d="M35.6 55.6 L46 68.4 L35.6 74.8 L25.6 68.4 Z" fill="#f6efa6"/><text x="35.8" y="82.6" text-anchor="middle" font-family="Liberation Sans" font-weight="bold" font-size="5.6" fill="#cfeedd">1874</text></svg>
<div class="t" style="left:188.40px;top:222.44px;font-size:18.70px;color:#0a1830;transform:scaleX(1.0505);font-weight:bold;font-family:'Liberation Serif',serif;text-shadow:1.6px 1.6px 1.6px rgba(0,70,75,0.55);">Релігієзнавчо-соціологічний аналіз</div>
<div class="t" style="left:79.00px;top:247.44px;font-size:18.70px;color:#0a1830;transform:scaleX(1.0523);font-weight:bold;font-family:'Liberation Serif',serif;text-shadow:1.6px 1.6px 1.6px rgba(0,70,75,0.55);">ролі релігійних цінностей в житті українського суспільства</div>
<div class="t" style="left:135.50px;top:270.54px;font-size:18.70px;color:#0a1830;transform:scaleX(1.0533);font-weight:bold;font-family:'Liberation Serif',serif;text-shadow:1.6px 1.6px 1.6px rgba(0,70,75,0.55);">(на матеріалах виробничої практики студентів</div>
<div class="t" style="left:182.50px;top:293.74px;font-size:18.70px;color:#0a1830;transform:scaleX(1.0536);font-weight:bold;font-family:'Liberation Serif',serif;text-shadow:1.6px 1.6px 1.6px rgba(0,70,75,0.55);">Історико-філософського факультету</div>
<div class="t" style="left:123.90px;top:318.04px;font-size:18.70px;color:#0a1830;transform:scaleX(1.0523);font-weight:bold;font-family:'Liberation Serif',serif;text-shadow:1.6px 1.6px 1.6px rgba(0,70,75,0.55);">Київського університету імені Бориса Грінченка)</div>
<svg class="r" style="left:188px;top:239.7px;" width="120" height="5" viewBox="0 0 120 5"><path d="M1 3.1 l1.7 -1.5 l1.7 1.5 l1.7 -1.5 l1.7 1.5 l1.7 -1.5 l1.7 1.5 l1.7 -1.5 l1.7 1.5 l1.7 -1.5 l1.7 1.5 l1.7 -1.5 l1.7 1.5 l1.7 -1.5 l1.7 1.5 l1.7 -1.5 l1.7 1.5 l1.7 -1.5 l1.7 1.5 l1.7 -1.5 l1.7 1.5 l1.7 -1.5 l1.7 1.5 l1.7 -1.5 l1.7 1.5 l1.7 -1.5 l1.7 1.5 l1.7 -1.5 l1.7 1.5 l1.7 -1.5 l1.7 1.5 l1.7 -1.5 l1.7 1.5 l1.7 -1.5 l1.7 1.5 l1.7 -1.5 l1.7 1.5 l1.7 -1.5 l1.7 1.5 l1.7 -1.5 l1.7 1.5 l1.7 -1.5 l1.7 1.5 l1.7 -1.5 l1.7 1.5 l1.7 -1.5 l1.7 1.5 l1.7 -1.5 l1.7 1.5 l1.7 -1.5 l1.7 1.5 l1.7 -1.5 l1.7 1.5 l1.7 -1.5 l1.7 1.5 l1.7 -1.5 l1.7 1.5 l1.7 -1.5 l1.7 1.5 l1.7 -1.5 l1.7 1.5 l1.7 -1.5 l1.7 1.5 l1.7 -1.5 l1.7 1.5 l1.7 -1.5 l1.7 1.5 l1.7 -1.5 l1.7 1.5" fill="none" stroke="#b9a9b0" stroke-width="0.9"/></svg>
<div class="t" style="left:571.60px;top:400.82px;font-size:19.80px;color:#141414;transform:scaleX(0.9941);font-weight:bold;font-family:'Liberation Serif',serif;">Підготували:</div>
<div class="t" style="left:561.40px;top:424.70px;font-size:16.60px;color:#141414;transform:scaleX(1.0641);font-weight:bold;font-style:italic;font-family:'Liberation Serif',serif;">Л.О.Филипович,</div>
<div class="t" style="left:401.60px;top:444.60px;font-size:17.20px;color:#141414;transform:scaleX(1.0239);font-style:italic;font-family:'Liberation Serif',serif;">доктор філософських наук, професор,</div>
<div class="t" style="left:570.50px;top:467.20px;font-size:16.60px;color:#141414;transform:scaleX(1.0636);font-weight:bold;font-style:italic;font-family:'Liberation Serif',serif;">В.В.Титаренко</div>
<div class="t" style="left:421.10px;top:488.00px;font-size:17.20px;color:#141414;transform:scaleX(1.0280);font-style:italic;font-family:'Liberation Serif',serif;">доктор філософських наук, доцент</div>
<svg class="r" style="left:561px;top:439.9px;" width="128" height="5" viewBox="0 0 128 5"><path d="M1 3.1 l1.7 -1.5 l1.7 1.5 l1.7 -1.5 l1.7 1.5 l1.7 -1.5 l1.7 1.5 l1.7 -1.5 l1.7 1.5 l1.7 -1.5 l1.7 1.5 l1.7 -1.5 l1.7 1.5 l1.7 -1.5 l1.7 1.5 l1.7 -1.5 l1.7 1.5 l1.7 -1.5 l1.7 1.5 l1.7 -1.5 l1.7 1.5 l1.7 -1.5 l1.7 1.5 l1.7 -1.5 l1.7 1.5 l1.7 -1.5 l1.7 1.5 l1.7 -1.5 l1.7 1.5 l1.7 -1.5 l1.7 1.5 l1.7 -1.5 l1.7 1.5 l1.7 -1.5 l1.7 1.5 l1.7 -1.5 l1.7 1.5 l1.7 -1.5 l1.7 1.5 l1.7 -1.5 l1.7 1.5 l1.7 -1.5 l1.7 1.5 l1.7 -1.5 l1.7 1.5 l1.7 -1.5 l1.7 1.5 l1.7 -1.5 l1.7 1.5 l1.7 -1.5 l1.7 1.5 l1.7 -1.5 l1.7 1.5 l1.7 -1.5 l1.7 1.5 l1.7 -1.5 l1.7 1.5 l1.7 -1.5 l1.7 1.5 l1.7 -1.5 l1.7 1.5 l1.7 -1.5 l1.7 1.5 l1.7 -1.5 l1.7 1.5 l1.7 -1.5 l1.7 1.5 l1.7 -1.5 l1.7 1.5 l1.7 -1.5 l1.7 1.5 l1.7 -1.5 l1.7 1.5 l1.7 -1.5 l1.7 1.5" fill="none" stroke="#d63b3b" stroke-width="0.8"/></svg>
<svg class="r" style="left:570px;top:482.5px;" width="120" height="5" viewBox="0 0 120 5"><path d="M1 3.1 l1.7 -1.5 l1.7 1.5 l1.7 -1.5 l1.7 1.5 l1.7 -1.5 l1.7 1.5 l1.7 -1.5 l1.7 1.5 l1.7 -1.5 l1.7 1.5 l1.7 -1.5 l1.7 1.5 l1.7 -1.5 l1.7 1.5 l1.7 -1.5 l1.7 1.5 l1.7 -1.5 l1.7 1.5 l1.7 -1.5 l1.7 1.5 l1.7 -1.5 l1.7 1.5 l1.7 -1.5 l1.7 1.5 l1.7 -1.5 l1.7 1.5 l1.7 -1.5 l1.7 1.5 l1.7 -1.5 l1.7 1.5 l1.7 -1.5 l1.7 1.5 l1.7 -1.5 l1.7 1.5 l1.7 -1.5 l1.7 1.5 l1.7 -1.5 l1.7 1.5 l1.7 -1.5 l1.7 1.5 l1.7 -1.5 l1.7 1.5 l1.7 -1.5 l1.7 1.5 l1.7 -1.5 l1.7 1.5 l1.7 -1.5 l1.7 1.5 l1.7 -1.5 l1.7 1.5 l1.7 -1.5 l1.7 1.5 l1.7 -1.5 l1.7 1.5 l1.7 -1.5 l1.7 1.5 l1.7 -1.5 l1.7 1.5 l1.7 -1.5 l1.7 1.5 l1.7 -1.5 l1.7 1.5 l1.7 -1.5 l1.7 1.5 l1.7 -1.5 l1.7 1.5 l1.7 -1.5 l1.7 1.5" fill="none" stroke="#d63b3b" stroke-width="0.8"/></svg>
<svg class="r" style="left:481px;top:503.7px;" width="108" height="5" viewBox="0 0 108 5"><path d="M1 3.1 l1.7 -1.5 l1.7 1.5 l1.7 -1.5 l1.7 1.5 l1.7 -1.5 l1.7 1.5 l1.7 -1.5 l1.7 1.5 l1.7 -1.5 l1.7 1.5 l1.7 -1.5 l1.7 1.5 l1.7 -1.5 l1.7 1.5 l1.7 -1.5 l1.7 1.5 l1.7 -1.5 l1.7 1.5 l1.7 -1.5 l1.7 1.5 l1.7 -1.5 l1.7 1.5 l1.7 -1.5 l1.7 1.5 l1.7 -1.5 l1.7 1.5 l1.7 -1.5 l1.7 1.5 l1.7 -1.5 l1.7 1.5 l1.7 -1.5 l1.7 1.5 l1.7 -1.5 l1.7 1.5 l1.7 -1.5 l1.7 1.5 l1.7 -1.5 l1.7 1.5 l1.7 -1.5 l1.7 1.5 l1.7 -1.5 l1.7 1.5 l1.7 -1.5 l1.7 1.5 l1.7 -1.5 l1.7 1.5 l1.7 -1.5 l1.7 1.5 l1.7 -1.5 l1.7 1.5 l1.7 -1.5 l1.7 1.5 l1.7 -1.5 l1.7 1.5 l1.7 -1.5 l1.7 1.5 l1.7 -1.5 l1.7 1.5 l1.7 -1.5 l1.7 1.5 l1.7 -1.5 l1.7 1.5" fill="none" stroke="#d63b3b" stroke-width="0.8"/></svg>
</div>
<div class="r" style="left:1504.5px;top:303px;width:17px;height:540px;background:#dcdbdc;"></div>
<div class="r" style="left:1504.6px;top:303.8px;width:15.8px;height:15.6px;background:#fff;box-sizing:border-box;border:1px solid #c9c9c9;"></div>
<svg class="r" style="left:1508.6px;top:308.6px;" width="8" height="6" viewBox="0 0 8 6"><path d="M0.4 5 L4 1 L7.6 5 Z" fill="#6e6e6e"/></svg>
<div class="r" style="left:1504.6px;top:320.4px;width:15.8px;height:30.2px;background:#fff;box-sizing:border-box;border:1px solid #c9c9c9;"></div>
<div class="r" style="left:1505px;top:785.6px;width:15.5px;height:16px;background:#fff;box-sizing:border-box;border:1px solid #c9c9c9;"></div>
<svg class="r" style="left:1508.8px;top:790.6px;" width="8" height="6" viewBox="0 0 8 6"><path d="M0.4 1 H7.6 L4 5 Z" fill="#6e6e6e"/></svg>
<svg class="r" style="left:1508px;top:807px;" width="9" height="10" viewBox="0 0 9 10"><path d="M0.6 4.4 L4.5 0.8 L8.4 4.4 Z M0.6 8.8 L4.5 5.2 L8.4 8.8 Z" fill="#6e6e6e"/></svg>
<svg class="r" style="left:1508px;top:826px;" width="9" height="10" viewBox="0 0 9 10"><path d="M0.6 1 H8.4 L4.5 4.6 Z M0.6 5.4 H8.4 L4.5 9 Z" fill="#6e6e6e"/></svg>
<div class="r" style="left:241px;top:864.4px;width:1281px;height:1px;background:#c6c6c6;"></div>
<div class="t" style="left:253.30px;top:874.53px;font-size:15.20px;color:#5c5c5c;transform:scaleX(1.0624);">Щелкните, чтобы добавить заметки</div>
<div class="r" style="left:6px;top:911px;width:1516px;height:24.2px;background:#f3f3f3;"></div>
<div class="r" style="left:6px;top:910.6px;width:1516px;height:0.8px;background:#d4d4d4;"></div>
<div class="t" style="left:15.00px;top:916.47px;font-size:12.20px;color:#505050;transform:scaleX(0.9839);">Слайд 1 из 15</div>
<svg class="r" style="left:121px;top:915px;" width="17" height="15" viewBox="0 0 17 15"><path d="M7.6 2.4 C5.6 0.8 3 0.8 0.8 1.6 V12 C3 11.2 5.6 11.2 7.6 12.8 Z" fill="none" stroke="#6a6a6a" stroke-width="1"/><path d="M7.6 2.4 C8.6 1.6 9.6 1.2 10.6 1.1 M7.6 12.8 C8.4 12.2 9 12 9.8 11.8" fill="none" stroke="#6a6a6a" stroke-width="1"/><path d="M10.6 5.6 L15.6 11.4 M15.6 5.6 L10.6 11.4" stroke="#6a6a6a" stroke-width="1.1"/></svg>
<div class="t" style="left:157.30px;top:916.47px;font-size:12.20px;color:#505050;transform:scaleX(1.0508);">русский</div>
<svg class="r" style="left:918px;top:917px;" width="14" height="13" viewBox="0 0 14 13"><path d="M7 0.2 L9.8 3.2 H4.2 Z" fill="#4a4a4a"/><path d="M2.4 5 H11.6 M0.4 8 H13.6 M0.4 11 H10.4" stroke="#4a4a4a" stroke-width="1.3"/></svg>
<div class="t" style="left:937.70px;top:917.67px;font-size:12.20px;color:#505050;transform:scaleX(1.0351);">Заметки</div>
<svg class="r" style="left:1007px;top:916px;" width="17" height="15" viewBox="0 0 17 15"><path d="M1 0.8 H16 V9.8 H8 L4.4 13.6 V9.8 H1 Z" fill="#4a4a4a"/></svg>
<div class="t" style="left:1027.00px;top:917.67px;font-size:12.20px;color:#505050;transform:scaleX(1.0790);">Примечания</div>
<div class="r" style="left:1124.6px;top:911.4px;width:44.4px;height:23.8px;background:#c9c9c9;"></div>
<svg class="r" style="left:1139px;top:916px;" width="16" height="14" viewBox="0 0 16 14"><rect x="0.6" y="0.6" width="14.8" height="12.4" fill="none" stroke="#5a5a5a" stroke-width="1.1"/><path d="M4 0.6 V13 M4 10 H15.4" stroke="#5a5a5a" stroke-width="1"/><rect x="6.6" y="2.8" width="6.6" height="4.6" fill="none" stroke="#6a6a6a" stroke-width="1"/></svg>
<svg class="r" style="left:1183px;top:916px;" width="16" height="14" viewBox="0 0 16 14"><rect x="0.6" y="0.8" width="5.6" height="4.4" fill="none" stroke="#6a6a6a" stroke-width="1.1"/><rect x="9.4" y="0.8" width="5.6" height="4.4" fill="none" stroke="#6a6a6a" stroke-width="1.1"/><rect x="0.6" y="8.4" width="5.6" height="4.4" fill="none" stroke="#6a6a6a" stroke-width="1.1"/><rect x="9.4" y="8.4" width="5.6" height="4.4" fill="none" stroke="#6a6a6a" stroke-width="1.1"/></svg>
<svg class="r" style="left:1227px;top:916px;" width="17" height="14" viewBox="0 0 17 14"><path d="M8.4 2.2 C6.4 0.6 3 0.6 0.8 1.4 V12 C3 11.2 6.4 11.2 8.4 12.8 C10.4 11.2 13.8 11.2 16 12 V1.4 C13.8 0.6 10.4 0.6 8.4 2.2 Z M8.4 2.2 V12.8" fill="none" stroke="#6a6a6a" stroke-width="1"/><path d="M2.6 4 H6.6 M2.6 6.4 H6.6 M2.6 8.8 H6.6 M10.2 4 H14.2 M10.2 6.4 H14.2 M10.2 8.8 H14.2" stroke="#8a8a8a" stroke-width="0.8"/></svg>
<svg class="r" style="left:1271px;top:915px;" width="17" height="16" viewBox="0 0 17 16"><path d="M0.6 1.4 H16" stroke="#6a6a6a" stroke-width="1.3"/><rect x="2.2" y="1.8" width="12.2" height="7.8" fill="none" stroke="#6a6a6a" stroke-width="1.1"/><path d="M8.3 9.8 V12.6 M5 15 L8.3 12.4 L11.6 15" fill="none" stroke="#6a6a6a" stroke-width="1.1"/></svg>
<div class="r" style="left:1308.6px;top:922.6px;width:8px;height:1.2px;background:#5a5a5a;"></div>
<div class="r" style="left:1324.5px;top:922.8px;width:110px;height:1px;background:#8a8a8a;"></div>
<div class="r" style="left:1378.6px;top:920px;width:1px;height:6.6px;background:#8a8a8a;"></div>
<div class="r" style="left:1357.8px;top:916.6px;width:4px;height:12.6px;background:#555;"></div>
<div class="r" style="left:1439.6px;top:922.6px;width:8.4px;height:1.2px;background:#5a5a5a;"></div>
<div class="r" style="left:1443.2px;top:919px;width:1.2px;height:8.4px;background:#5a5a5a;"></div>
<div class="t" style="left:1463.00px;top:917.67px;font-size:12.20px;color:#505050;transform:scaleX(0.9419);">67%</div>
<svg class="r" style="left:1500.6px;top:915.4px;" width="16" height="15" viewBox="0 0 16 15"><rect x="0.6" y="0.6" width="14.4" height="13.4" fill="none" stroke="#6a6a6a" stroke-width="1.1"/><path d="M7.8 2.4 V5 M7.8 9.6 V12.2 M2.6 7.3 H5 M10.6 7.3 H13 M6.6 3.6 L7.8 2.4 L9 3.6 M6.6 11 L7.8 12.2 L9 11 M3.8 6.1 L2.6 7.3 L3.8 8.5 M11.8 6.1 L13 7.3 L11.8 8.5" fill="none" stroke="#6a6a6a" stroke-width="0.9"/></svg>
<div class="r" style="left:6px;top:935.2px;width:1516px;height:0.8px;background:#2b2b2b;"></div>
<div class="r" style="left:1521px;top:417px;width:2px;height:19px;background:#0c0c0c;"></div>
<div class="r" style="left:1526.2px;top:518px;width:1px;height:26px;background:#9a9a9a;"></div>
<div class="r" style="left:1529.6px;top:518px;width:1px;height:26px;background:#9a9a9a;"></div>
<div class="r" style="left:1534px;top:425px;width:380px;height:213px;background:#000;"></div>
<svg class="r" style="left:1582px;top:425px;" width="285" height="213" viewBox="0 0 285 213"><defs><filter id="vb1" x="-10%" y="-10%" width="120%" height="120%"><feGaussianBlur stdDeviation="5"/></filter><filter id="vb2" x="-10%" y="-10%" width="120%" height="120%"><feGaussianBlur stdDeviation="2.2"/></filter><filter id="vb3" x="-10%" y="-10%" width="120%" height="120%"><feGaussianBlur stdDeviation="1.1"/></filter><clipPath id="vc"><rect x="0" y="0" width="285" height="213"/></clipPath></defs><g clip-path="url(#vc)"><rect x="0" y="0" width="285" height="213" fill="#c9b79c"/><g filter="url(#vb1)"><rect x="-10" y="-10" width="46" height="240" fill="#b5dfe6"/><rect x="8" y="-10" width="14" height="240" fill="#d2f0f2"/><rect x="36" y="-10" width="22" height="240" fill="#94805f"/><rect x="38" y="66" width="20" height="70" fill="#6e5646"/><rect x="58" y="-10" width="104" height="150" fill="#d6c4a4"/><rect x="76" y="10" width="70" height="60" fill="#e2d2b4"/><rect x="44" y="60" width="30" height="90" fill="#a48c70"/><rect x="160" y="-10" width="135" height="240" fill="#55352c"/><ellipse cx="196" cy="48" rx="22" ry="20" fill="#2e1c1c"/><ellipse cx="232" cy="84" rx="26" ry="16" fill="#2a1c20"/><ellipse cx="196" cy="8" rx="18" ry="7" fill="#7c3850"/><ellipse cx="234" cy="10" rx="16" ry="7" fill="#5c6864"/><rect x="166" y="100" width="40" height="60" fill="#6e4234"/><rect x="198" y="134" width="62" height="75" fill="#846468"/><ellipse cx="232" cy="186" rx="30" ry="16" fill="#a88c92"/><ellipse cx="214" cy="150" rx="16" ry="10" fill="#9a7478"/><rect x="264" y="112" width="30" height="100" fill="#5f8caa"/><rect x="258" y="20" width="30" height="70" fill="#46302c"/><rect x="0" y="170" width="40" height="50" fill="#8fb6b8"/></g><g filter="url(#vb2)"><path d="M2 213 C10 190 28 150 50 132 C66 122 84 118 100 116 L154 118 C176 124 196 136 206 160 C212 180 216 200 220 213 Z" fill="#07070f"/><path d="M50 132 C40 150 30 176 22 213 H44 C48 180 52 156 60 136 Z" fill="#101830"/><path d="M78 118 C66 120 54 128 46 138 C54 140 66 142 74 146 C76 136 78 126 78 118 Z" fill="#152c70" opacity="0.75"/></g><g filter="url(#vb3)"><path d="M78 118 C82 146 94 166 103 172 C116 166 140 146 148 118 C136 112 92 110 78 118 Z" fill="#c79887"/><ellipse cx="107" cy="94" rx="31" ry="41" fill="#c69786"/><ellipse cx="107" cy="122" rx="24" ry="16" fill="#c08f7d"/><ellipse cx="81" cy="101" rx="4.4" ry="10" fill="#eed8d2" opacity="0.7"/><ellipse cx="126" cy="102" rx="8" ry="12" fill="#b58472" opacity="0.7"/><ellipse cx="108" cy="72" rx="20" ry="9" fill="#d2a696" opacity="0.8"/><path d="M68 92 C62 74 66 54 73 46 C78 38 90 36 100 41 C106 35 120 33 129 43 C141 52 148 70 144.5 92 C142 99 138 99 136 96 C136 84 134 74 126 64 C118 56 100 54 91 60 C82 66 80 76 79 90 C76 96 70 96 68 92 Z" fill="#2a171b"/><path d="M76 50 C84 40 98 40 104 44 C94 46 84 52 80 62 Z" fill="#432a2c" opacity="0.8"/><path d="M90 84.6 C92 83.4 96 83.6 98 85 M116 85.2 C119 84 123 84.4 125 86" stroke="#4a302c" stroke-width="2.2" fill="none"/><path d="M88 80 C92 78 97 78.6 100 80 M114 80.4 C118 79 123 79.4 127 81.4" stroke="#9a6e62" stroke-width="1.4" fill="none" opacity="0.7"/><path d="M97 114 C102 113 110 113 116 114.4" stroke="#a8606a" stroke-width="2.4" fill="none"/><path d="M104 90 C102 96 100 100 103 102 C106 103.4 110 103 112 101" stroke="#a87868" stroke-width="1.5" fill="none"/><ellipse cx="94" cy="90" rx="6" ry="2.4" fill="#a8786c" opacity="0.5"/><ellipse cx="121" cy="91" rx="6" ry="2.4" fill="#a8786c" opacity="0.5"/></g><g filter="url(#vb3)"><path d="M76 116 C79 144 92 166 102.5 173 L104.5 213 M150 116 C144 146 120 166 102.5 173" fill="none" stroke="#e9e6ea" stroke-width="1.7"/><path d="M122 192 C134 198 150 196 160 192" fill="none" stroke="#e9e6ea" stroke-width="1.8"/><circle cx="141" cy="203" r="1.6" fill="#8a8aa0"/><circle cx="101.3" cy="176.3" r="1.6" fill="#9a9ab0"/><circle cx="98" cy="204" r="1.5" fill="#8a8aa0"/></g></g></svg>
<div class="r" style="left:1535px;top:619px;width:142px;height:19px;background:rgba(34,34,34,0.94);"></div>
<svg class="r" style="left:1537px;top:622px;" width="15" height="12" viewBox="0 0 15 12"><rect x="0.4" y="8.4" width="2.2" height="3.6" fill="#fff"/><rect x="4.2" y="5.8" width="2.2" height="6.2" fill="#fff"/><rect x="8" y="3" width="2.2" height="9" fill="#fff"/><rect x="11.8" y="0.2" width="2.2" height="11.8" fill="#fff"/></svg>
<div class="t" style="left:1556.40px;top:622.97px;font-size:12.20px;color:#fff;transform:scaleX(1.0280);">Liudmyla Fylypovych</div>
<svg class="r" style="left:38px;top:990px;" width="28" height="28" viewBox="0 0 28 28"><rect x="10.2" y="3" width="7.6" height="14" rx="3.8" fill="#b8b8b8"/><path d="M7 12.5 V13.5 A7 7 0 0 0 21 13.5 V12.5" fill="none" stroke="#b8b8b8" stroke-width="1.7"/><path d="M14 20.5 V24 M10 24.6 H18" stroke="#b8b8b8" stroke-width="1.8"/><path d="M24.5 2 L1.5 25.5" stroke="#e25555" stroke-width="1.6"/></svg>
<svg class="r" style="left:84px;top:1000px;" width="10" height="8" viewBox="0 0 10 8"><path d="M1.2 5.8 L5 2.2 L8.8 5.8" fill="none" stroke="#c8c8c8" stroke-width="1.3"/></svg>
<div class="t" style="left:10.60px;top:1020.78px;font-size:11.60px;color:#c9c6c3;transform:scaleX(1.0651);">Включить звук</div>
<svg class="r" style="left:147px;top:996px;" width="26" height="16" viewBox="0 0 26 16"><rect x="1" y="1" width="16.6" height="14" rx="3.2" fill="#b8b8b8"/><path d="M19 6.2 L25 2.2 V13.8 L19 9.8 Z" fill="#b8b8b8" stroke="#b8b8b8" stroke-width="0.8" stroke-linejoin="round"/></svg>
<svg class="r" style="left:202px;top:1000px;" width="10" height="8" viewBox="0 0 10 8"><path d="M1.2 5.8 L5 2.2 L8.8 5.8" fill="none" stroke="#c8c8c8" stroke-width="1.3"/></svg>
<div class="t" style="left:109.40px;top:1020.78px;font-size:11.60px;color:#c9c6c3;transform:scaleX(1.0298);">Остановить видео</div>
<svg class="r" style="left:816px;top:995px;" width="26" height="19" viewBox="0 0 26 19"><circle cx="8.4" cy="4.6" r="4.1" fill="#b8b8b8"/><path d="M0.6 17.6 C0.6 11.6 4.4 10 8.4 10 C12.4 10 16.2 11.6 16.2 17.6 Z" fill="#b8b8b8"/><circle cx="18.8" cy="6.3" r="3.3" fill="#b8b8b8"/><path d="M17.6 17.6 C17.6 14.5 16.8 12.7 15.6 11.6 C16.6 11 17.8 10.8 18.8 10.8 C22.2 10.8 25 12.4 25 17.6 Z" fill="#b8b8b8"/></svg>
<div class="t" style="left:845.00px;top:995.87px;font-size:12.20px;color:#d0d0d0;transform:scaleX(0.9580);">52</div>
<svg class="r" style="left:877px;top:1000px;" width="10" height="8" viewBox="0 0 10 8"><path d="M1.2 5.8 L5 2.2 L8.8 5.8" fill="none" stroke="#c8c8c8" stroke-width="1.3"/></svg>
<div class="t" style="left:800.30px;top:1020.98px;font-size:11.60px;color:#c9c6c3;transform:scaleX(1.0412);">Участники</div>
<svg class="r" style="left:923px;top:994px;" width="22" height="20" viewBox="0 0 22 20"><path d="M4.5 0.8 H17.5 A3.6 3.6 0 0 1 21.1 4.4 V10.6 A3.6 3.6 0 0 1 17.5 14.2 H9.6 L5.2 18.9 V14.2 H4.5 A3.6 3.6 0 0 1 0.9 10.6 V4.4 A3.6 3.6 0 0 1 4.5 0.8 Z" fill="#b8b8b8"/></svg>
<div class="t" style="left:924.50px;top:1020.98px;font-size:11.60px;color:#c9c6c3;transform:scaleX(0.9511);">Чат</div>
<div class="r" style="left:1030.8px;top:994.8px;width:24.4px;height:18.4px;background:#23d959;border-radius:3px;"></div>
<svg class="r" style="left:1036px;top:997px;" width="14" height="14" viewBox="0 0 14 14"><path d="M7 11.8 V3.4 M3.6 6.6 L7 3.2 L10.4 6.6" fill="none" stroke="#12301a" stroke-width="1.9"/></svg>
<div class="t" style="left:982.30px;top:1020.98px;font-size:11.60px;color:#2fd35f;transform:scaleX(1.0351);">Демонстрация экрана</div>
<svg class="r" style="left:1142px;top:993px;" width="22" height="22" viewBox="0 0 22 22"><circle cx="11" cy="11" r="9.6" fill="none" stroke="#b8b8b8" stroke-width="1.4"/><circle cx="11" cy="11" r="7" fill="#b8b8b8"/></svg>
<div class="t" style="left:1132.90px;top:1020.98px;font-size:11.60px;color:#c9c6c3;transform:scaleX(1.0273);">Запись</div>
<svg class="r" style="left:1222px;top:991px;" width="26" height="24" viewBox="0 0 26 24"><circle cx="11" cy="13.2" r="9.3" fill="#b8b8b8"/><circle cx="7.8" cy="11" r="1.3" fill="#1a1a1a"/><circle cx="14" cy="11" r="1.3" fill="#1a1a1a"/><path d="M6.6 15 C8 18.2 14 18.2 15.4 15" fill="none" stroke="#1a1a1a" stroke-width="1.4"/><circle cx="19.5" cy="5.3" r="4.6" fill="#1a1a1a"/><path d="M19.5 2 V8.6 M16.2 5.3 H22.8" stroke="#b8b8b8" stroke-width="1.2"/></svg>
<div class="t" style="left:1210.00px;top:1020.98px;font-size:11.60px;color:#c9c6c3;transform:scaleX(1.0266);">Реакции</div>
<div class="t" style="left:1421.70px;top:948.56px;font-size:18.60px;color:#8d8d8d;transform:scaleX(1.0656);">Активація Windows</div>
<div class="t" style="left:1421.70px;top:973.30px;font-size:15.00px;color:#8d8d8d;">Перейдіть до розділу "Настройки", щоб активувати Windows.</div>
<div class="r" style="left:1846.5px;top:1000px;width:61.5px;height:27px;background:#c3282d;border-radius:7px;"></div>
<div class="t" style="left:1857.80px;top:1007.21px;font-size:11.80px;color:#fff;transform:scaleX(0.9746);font-weight:bold;">Выйти</div>
<div class="r" style="left:0px;top:1040px;width:1920px;height:40px;background:#1f3333;"></div>
<svg class="r" style="left:16px;top:1052px;" width="16" height="16" viewBox="0 0 16 16"><path d="M0 2.3 L6.6 1.4 V7.6 H0 Z M7.4 1.3 L16 0 V7.6 H7.4 Z M0 8.4 H6.6 V14.6 L0 13.7 Z M7.4 8.4 H16 V16 L7.4 14.7 Z" fill="#fff"/></svg>
<svg class="r" style="left:62px;top:1050px;" width="20" height="20" viewBox="0 0 20 20"><circle cx="12.6" cy="7.4" r="5" fill="none" stroke="#fff" stroke-width="1.3"/><path d="M9 11 L2.2 17.8" stroke="#fff" stroke-width="1.4"/></svg>
<svg class="r" style="left:111px;top:1051px;" width="18" height="18" viewBox="0 0 18 18"><circle cx="9" cy="9" r="6.9" fill="none" stroke="#fff" stroke-width="1.9"/></svg>
<svg class="r" style="left:160px;top:1050px;" width="22" height="19" viewBox="0 0 22 19"><path d="M0 1.6 H7 L8.6 3 H21.5 V18.6 H0 Z" fill="#f1b93a"/><path d="M0 5 H21.5 V18.6 H0 Z" fill="#fbd45f"/><path d="M4.5 18.6 V11.8 H17 V18.6 H13.4 V14.6 H8.1 V18.6 Z" fill="#3f97e0"/></svg>
<div class="r" style="left:151px;top:1078px;width:40px;height:2px;background:#76b9ed;"></div>
<svg class="r" style="left:208px;top:1048px;" width="24" height="24" viewBox="0 0 24 24"><rect x="11" y="3.2" width="12" height="17.6" fill="#fff"/><path d="M13.5 6 H21 M13.5 8.4 H21 M13.5 10.8 H21 M13.5 13.2 H21 M13.5 15.6 H21 M13.5 18 H21" stroke="#2b579a" stroke-width="1"/><path d="M0.5 3 L13.6 0.6 V23.4 L0.5 21 Z" fill="#2b579a"/><path d="M3 8 L4.5 16 L6.6 9.6 L8.7 16 L10.4 8" fill="none" stroke="#fff" stroke-width="1.5"/></svg>
<div class="r" style="left:200px;top:1078px;width:31px;height:2px;background:#76b9ed;"></div>
<div class="r" style="left:231px;top:1078px;width:9px;height:2px;background:#5d94c0;"></div>
<svg class="r" style="left:257px;top:1048px;" width="24" height="24" viewBox="0 0 24 24"><ellipse cx="12" cy="12" rx="11.2" ry="11.8" fill="#e8152c"/><ellipse cx="12" cy="12" rx="5" ry="8.8" fill="#1f3333"/><path d="M17 3.5 A11 11.5 0 0 1 17 20.5 A8 10 0 0 0 17 3.5Z" fill="#a70e1c" opacity="0.7"/></svg>
<div class="r" style="left:249px;top:1078px;width:40px;height:2px;background:#76b9ed;"></div>
<div class="r" style="left:294px;top:1040px;width:48px;height:40px;background:#4d5b5b;"></div>
<div class="r" style="left:294px;top:1078px;width:48px;height:2px;background:#76b9ed;"></div>
<svg class="r" style="left:307px;top:1048.7px;" width="22" height="22" viewBox="0 0 22 22"><rect x="0" y="0" width="22" height="22" rx="6" fill="#4a8cff"/><rect x="4.3" y="7.4" width="9.6" height="7.4" rx="1.8" fill="#fff"/><path d="M14.6 10.1 L18 7.8 V14.4 L14.6 12.1 Z" fill="#fff"/></svg>
<svg class="r" style="left:1650px;top:1055px;" width="14" height="9" viewBox="0 0 14 9"><path d="M1.2 8 L7 2 L12.8 8" fill="none" stroke="#fff" stroke-width="1.2"/></svg>
<svg class="r" style="left:1672px;top:1051px;" width="19" height="18" viewBox="0 0 19 18"><path d="M1.2 3.6 L15.6 1.4 V12.6 L1.2 14.8 Z" fill="none" stroke="#fff" stroke-width="1.2"/><path d="M5.6 9.8 A3 3 0 0 1 10.6 6.4 M11 4.8 V6.8 H9 M11.2 7.6 A3 3 0 0 1 6.2 11 M5.8 12.6 V10.6 H7.8" fill="none" stroke="#fff" stroke-width="0.9"/><circle cx="13.6" cy="13.6" r="3.6" fill="#f7941d"/></svg>
<svg class="r" style="left:1698px;top:1051px;" width="13" height="18" viewBox="0 0 13 18"><rect x="3.4" y="0.8" width="6.2" height="11" rx="3.1" fill="#fff"/><path d="M1.2 8 V9 A5.3 5.3 0 0 0 11.8 9 V8" fill="none" stroke="#fff" stroke-width="1"/><path d="M6.5 14.4 V16.4 M3.6 16.8 H9.4" stroke="#fff" stroke-width="1"/></svg>
<svg class="r" style="left:1720px;top:1053px;" width="18" height="15" viewBox="0 0 18 15"><rect x="4.6" y="1.6" width="12" height="8.6" fill="none" stroke="#fff" stroke-width="1.1"/><path d="M10.6 10.2 V13.4 M6.4 13.6 H14.8" stroke="#fff" stroke-width="1.1"/><rect x="1" y="1.2" width="3.8" height="3.6" fill="#1f3333" stroke="#fff" stroke-width="0.9"/><path d="M2.9 4.8 V13.6 H6" fill="none" stroke="#fff" stroke-width="0.9"/></svg>
<svg class="r" style="left:1744px;top:1052px;" width="18" height="16" viewBox="0 0 18 16"><path d="M1 5.4 H3.8 L7.4 1.8 V14.2 L3.8 10.6 H1 Z" fill="none" stroke="#fff" stroke-width="1"/><path d="M9.6 5.6 A3.4 3.4 0 0 1 9.6 10.4 M11.8 3.6 A6.2 6.2 0 0 1 11.8 12.4 M14 1.6 A9 9 0 0 1 14 14.4" fill="none" stroke="#fff" stroke-width="1"/></svg>
<div class="t" style="left:1771.70px;top:1053.47px;font-size:12.20px;color:#fff;transform:scaleX(0.8246);">ENG</div>
<div class="t" style="left:1820.80px;top:1044.27px;font-size:12.20px;color:#fff;transform:scaleX(0.8776);">11:05</div>
<div class="t" style="left:1807.00px;top:1062.37px;font-size:12.20px;color:#fff;transform:scaleX(0.8680);">21.05.2021</div>
<svg class="r" style="left:1878px;top:1051px;" width="26" height="26" viewBox="0 0 26 26"><path d="M1 1 H17 V12 H7.4 L4.4 15 V12 H1 Z" fill="#fff"/><path d="M4 4.4 H14 M4 6.8 H14 M4 9.2 H11" stroke="#1f3333" stroke-width="1"/><circle cx="16.5" cy="16.6" r="7.6" fill="#2a3636" stroke="#8a9494" stroke-width="0.9"/><path d="M14.8 13.8 L17 12.6 V20.6" fill="none" stroke="#fff" stroke-width="1.6"/></svg>
<div class="r" style="left:1915px;top:1040px;width:1px;height:40px;background:#7c8a8a;"></div>
</body></html>
